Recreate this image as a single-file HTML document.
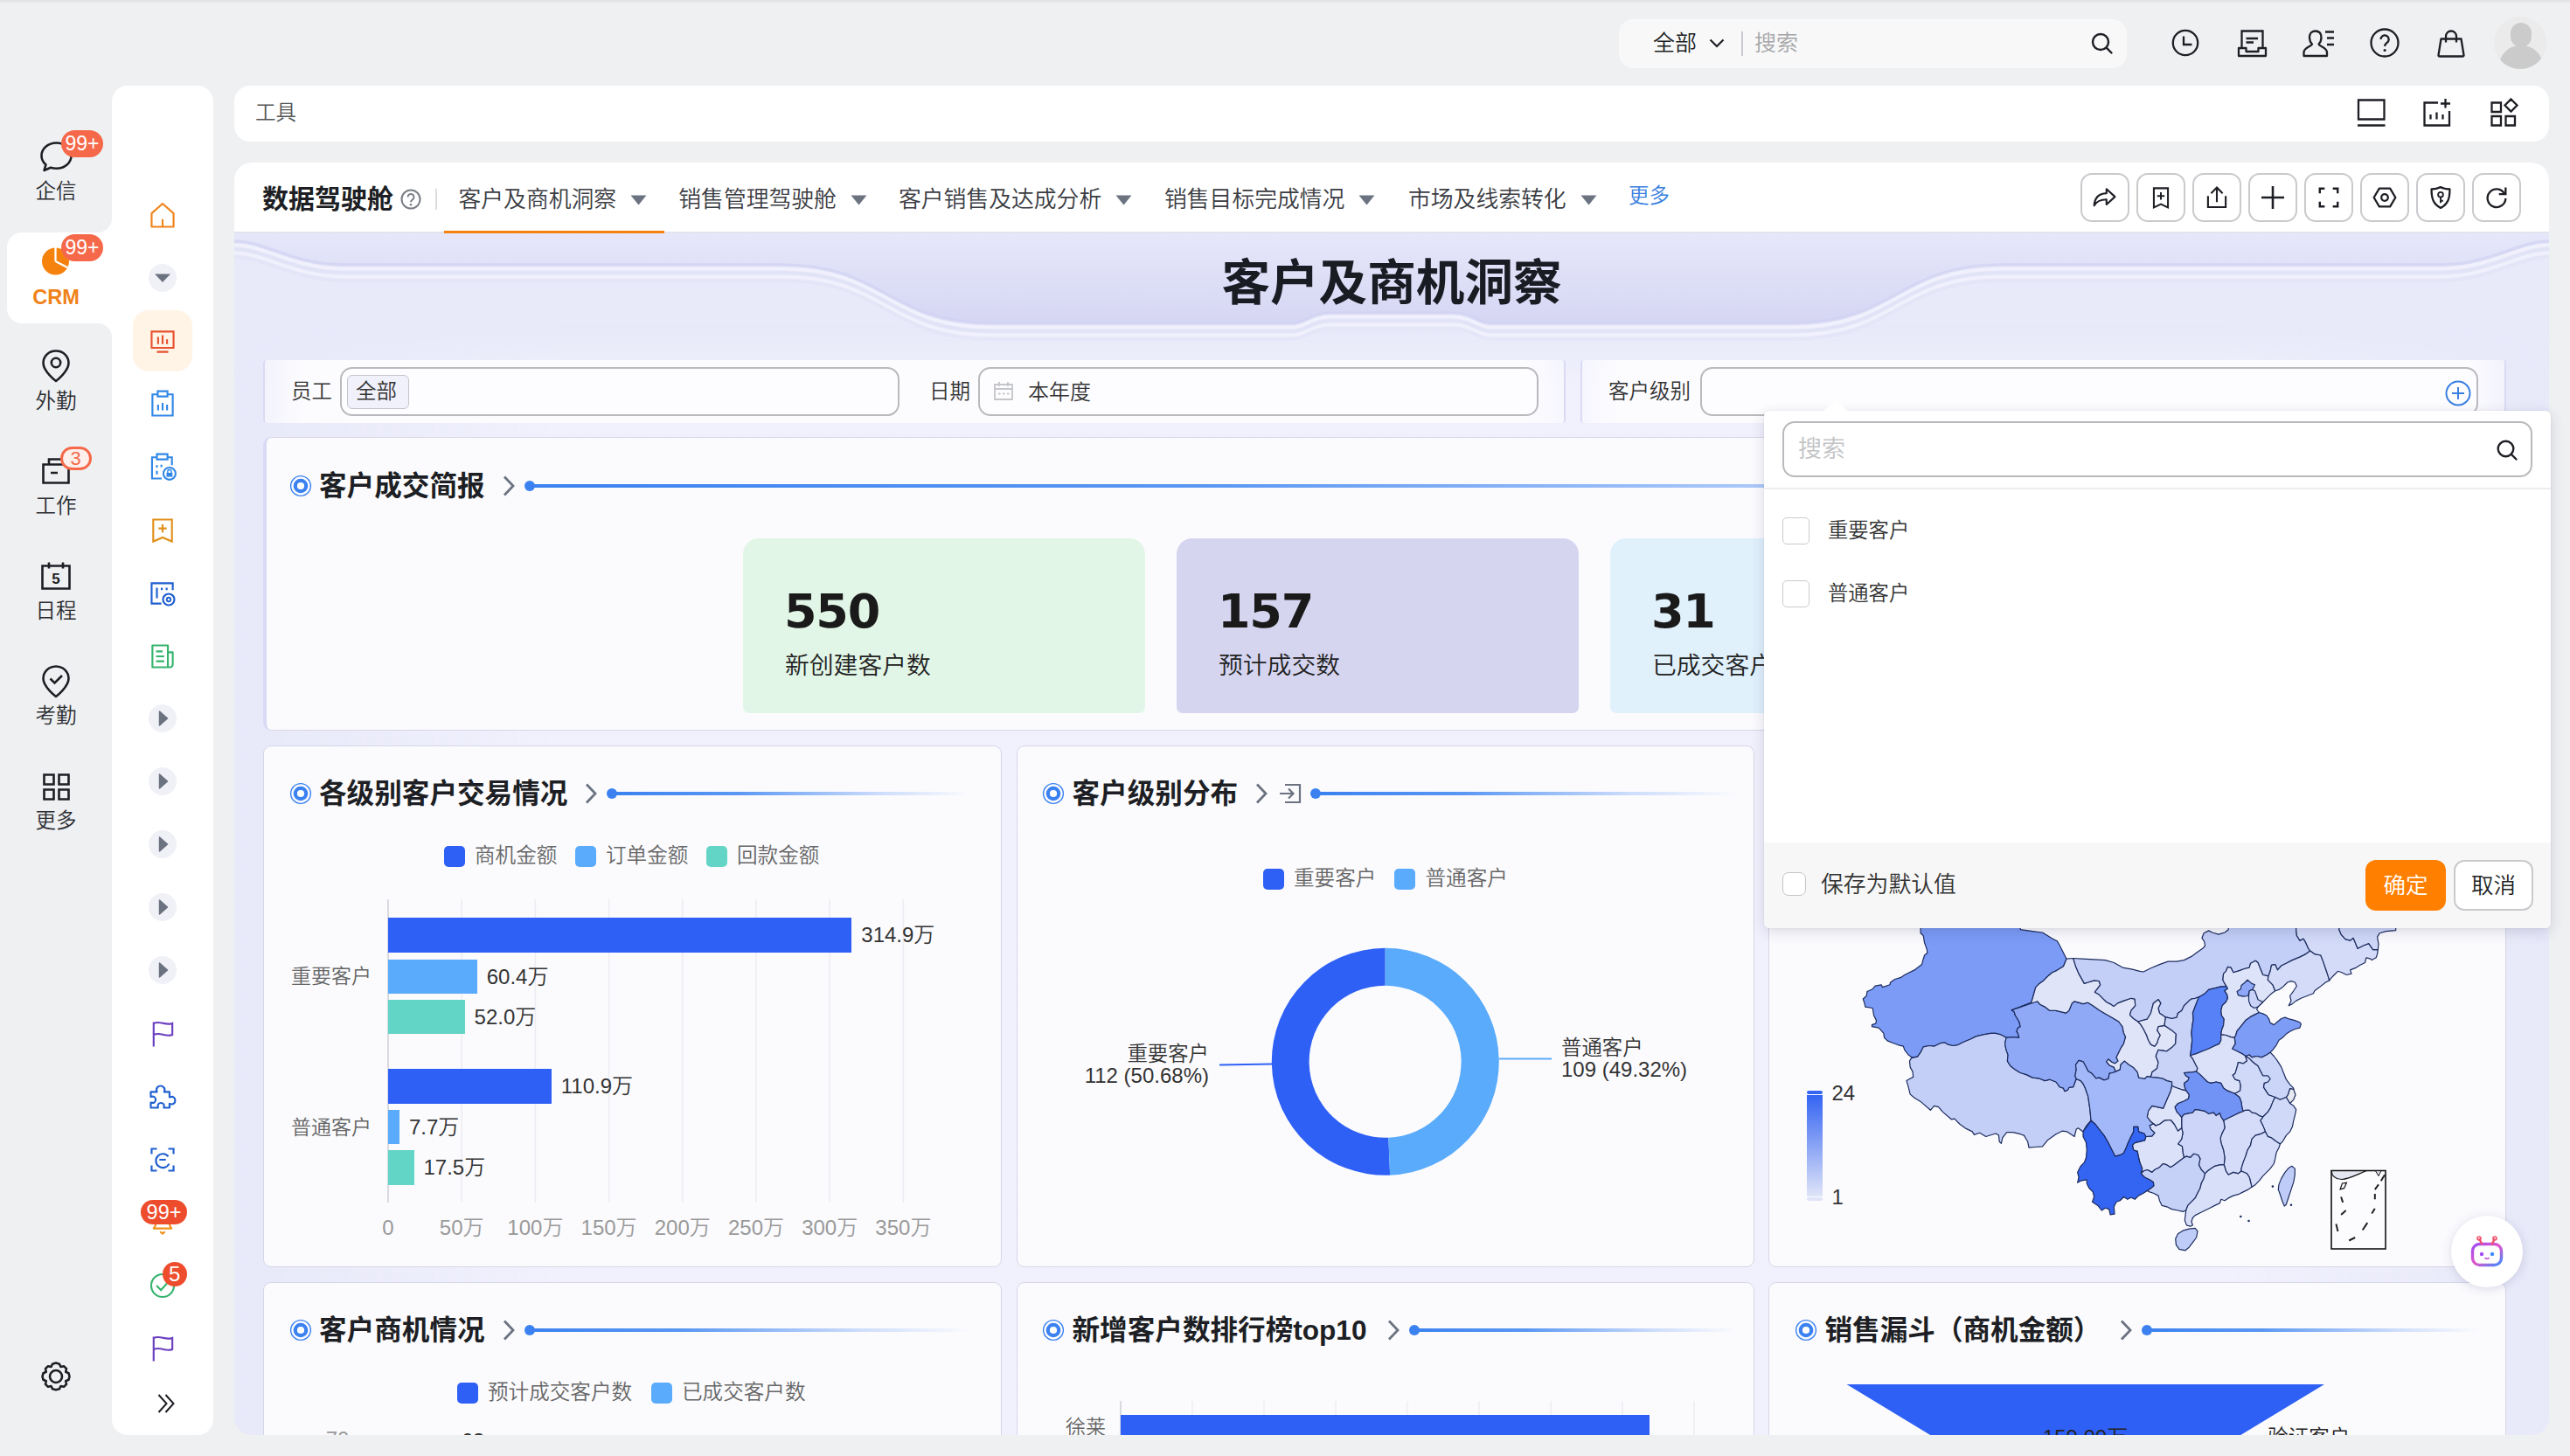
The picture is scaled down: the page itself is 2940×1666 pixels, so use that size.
<!DOCTYPE html>
<html lang="zh-CN"><head><meta charset="utf-8"><title>数据驾驶舱</title>
<style>
html,body{margin:0;padding:0}
body{width:2940px;height:1666px;background:#eff0f2;position:relative;overflow:hidden;font-family:"Liberation Sans","Noto Sans CJK SC",sans-serif;font-weight:350;}
div{box-sizing:border-box}
</style></head><body>
<div style="position:absolute;left:0px;top:0px;width:2940px;height:4px;background:linear-gradient(#dfe0e3,#eff0f2)"></div>
<div style="position:absolute;left:8px;top:266px;width:121px;height:104px;background:#fff;border-radius:17px 0 0 17px"></div>
<div style="position:absolute;left:112px;top:250px;width:16px;height:16px;background:#fff"></div>
<div style="position:absolute;left:96px;top:234px;width:32px;height:32px;background:#eff0f2;border-radius:0 0 16px 0"></div>
<div style="position:absolute;left:112px;top:370px;width:16px;height:16px;background:#fff"></div>
<div style="position:absolute;left:96px;top:370px;width:32px;height:32px;background:#eff0f2;border-radius:0 16px 0 0"></div>
<div style="position:absolute;top:201.5px;height:35px;line-height:35px;font-size:23.5px;color:#2a2c31;font-weight:350;white-space:nowrap;left:-436px;width:1000px;text-align:center;">企信</div>
<div style="position:absolute;top:322.5px;height:35px;line-height:35px;font-size:23.6px;color:#f0821a;font-weight:700;white-space:nowrap;left:-436px;width:1000px;text-align:center;">CRM</div>
<div style="position:absolute;top:441.5px;height:35px;line-height:35px;font-size:23.5px;color:#2a2c31;font-weight:350;white-space:nowrap;left:-436px;width:1000px;text-align:center;">外勤</div>
<div style="position:absolute;top:561.5px;height:35px;line-height:35px;font-size:23.5px;color:#2a2c31;font-weight:350;white-space:nowrap;left:-436px;width:1000px;text-align:center;">工作</div>
<div style="position:absolute;top:681.5px;height:35px;line-height:35px;font-size:23.5px;color:#2a2c31;font-weight:350;white-space:nowrap;left:-436px;width:1000px;text-align:center;">日程</div>
<div style="position:absolute;top:801.5px;height:35px;line-height:35px;font-size:23.5px;color:#2a2c31;font-weight:350;white-space:nowrap;left:-436px;width:1000px;text-align:center;">考勤</div>
<div style="position:absolute;top:921.5px;height:35px;line-height:35px;font-size:23.5px;color:#2a2c31;font-weight:350;white-space:nowrap;left:-436px;width:1000px;text-align:center;">更多</div>
<svg style="position:absolute;left:44px;top:160px;" width="42" height="40" viewBox="0 0 42 40" fill="none"><path d="M20.5 3.5C11 3.500 3.5 10 3.5 18.2c0 4 1.900 7.600 5 10.200L6.500 35l7.500-3.200c2 .6 4.200 1 6.500 1 9.500 0 17-6.500 17-14.600S30 3.500 20.500 3.500z" stroke="#1d1f24" stroke-width="2.600" stroke-linejoin="round"/></svg>
<div style="position:absolute;left:70px;top:149px;width:48px;height:31px;border-radius:15.5px;background:#f5694a;color:#fff;font-size:23px;line-height:31px;text-align:center;">99+</div>
<svg style="position:absolute;left:46px;top:281px;" width="40" height="40" viewBox="0 0 40 40" fill="none"><circle cx="17.5" cy="18" r="15.500" fill="#f5820d"/><path d="M17.500 18V1 M17.500 18L33 26" stroke="#fff" stroke-width="2.300"/></svg>
<div style="position:absolute;left:70px;top:267.5px;width:48px;height:31px;border-radius:15.5px;background:#f5694a;color:#fff;font-size:23px;line-height:31px;text-align:center;">99+</div>
<svg style="position:absolute;left:46px;top:399px;" width="36" height="40" viewBox="0 0 36 40" fill="none"><path d="M18 2.500C9.500 2.500 3.500 8.800 3.500 16.500 3.500 26 18 37 18 37s14.500-11 14.500-20.500C32.500 8.800 26.500 2.500 18 2.500z" stroke="#1d1f24" stroke-width="2.600" stroke-linejoin="round"/><circle cx="18" cy="16" r="5.200" stroke="#1d1f24" stroke-width="2.600"/></svg>
<svg style="position:absolute;left:46px;top:522px;" width="36" height="34" viewBox="0 0 36 34" fill="none"><path d="M3.500 9.500h29v21h-29z M10 9.500V3.500h16v6 M12 19h8" stroke="#1d1f24" stroke-width="2.600"/></svg>
<div style="position:absolute;left:68.500px;top:510.500px;width:36px;height:27px;border-radius:13.500px;background:#fdf0ec;border:3px solid #f5694a;color:#f5694a;font-size:22px;line-height:21px;text-align:center;">3</div>
<svg style="position:absolute;left:46px;top:642px;" width="36" height="34" viewBox="0 0 36 34" fill="none"><path d="M2.500 5.500h31v26h-31z M10 1.500v7 M26 1.500v7" stroke="#1d1f24" stroke-width="2.600"/><text x="18" y="26" font-size="17" font-weight="700" text-anchor="middle" fill="#1d1f24" font-family="Liberation Sans,sans-serif">5</text></svg>
<svg style="position:absolute;left:46px;top:760px;" width="36" height="40" viewBox="0 0 36 40" fill="none"><path d="M18 2.500C9.500 2.500 3.500 8.800 3.500 16.500 3.500 26 18 37 18 37s14.500-11 14.500-20.500C32.500 8.800 26.500 2.500 18 2.500z" stroke="#1d1f24" stroke-width="2.600" stroke-linejoin="round"/><path d="M11.500 16.500l5 5 8.500-8.500" stroke="#1d1f24" stroke-width="2.600"/></svg>
<svg style="position:absolute;left:48px;top:884px;" width="34" height="34" viewBox="0 0 34 34" fill="none"><path d="M2.500 2.500h11v11h-11z M19.500 2.500h11v11h-11z M2.500 19.500h11v11h-11z M19.500 19.500h11v11h-11z" stroke="#1d1f24" stroke-width="2.600"/></svg>
<svg style="position:absolute;left:44px;top:1555px;" width="40" height="40" viewBox="0 0 40 40" fill="none"><path d="M20 4.500l4 1.200 1.500 3.300 3.500-.8 3 3-.8 3.500 3.300 1.500L35.500 20l-1 3.800-3.300 1.500.8 3.500-3 3-3.500-.8-1.500 3.300-4 1-4-1-1.500-3.300-3.500.8-3-3 .8-3.500-3.300-1.500-1-3.800 1-3.800 3.300-1.500-.8-3.500 3-3 3.500.8L16 5.700z" stroke="#1d1f24" stroke-width="2.600" stroke-linejoin="round"/><circle cx="20" cy="20" r="7" stroke="#1d1f24" stroke-width="2.600"/></svg>
<div style="position:absolute;left:128px;top:97.5px;width:116px;height:1544.5px;background:#fff;border-radius:18px"></div>
<div style="position:absolute;left:128px;top:250px;width:20px;height:140px;background:#fff"></div>
<svg style="position:absolute;left:168.0px;top:227.5px;" width="36" height="36" viewBox="0 0 36 36" fill="none"><g transform="translate(18.0 18.0) scale(0.93) translate(-18.0 -18.0)"><path d="M4.500 16L18 4l13.500 12v16.500h-27z M18 32v-9" stroke="#f0831a" stroke-width="2.300" stroke-linejoin="round"/></g></svg>
<div style="position:absolute;left:170px;top:302px;width:32px;height:32px;background:#f0f1f7;border-radius:16px"></div>
<svg style="position:absolute;left:176px;top:312px;" width="20" height="12" viewBox="0 0 20 12" fill="none"><path d="M1 1.500h18L10 11z" fill="#6b7280"/></svg>
<div style="position:absolute;left:152px;top:355px;width:68px;height:70px;background:#fff4e6;border-radius:18px"></div>
<svg style="position:absolute;left:168.0px;top:372.5px;" width="36" height="36" viewBox="0 0 36 36" fill="none"><g transform="translate(18.0 18.0) scale(0.93) translate(-18.0 -18.0)"><path d="M4.500 5.500h27v20h-27z M11 30.500h14" stroke="#e8502f" stroke-width="2.300"/><path d="M12.500 12v9 M18 10v11 M23.500 15v6" stroke="#e8502f" stroke-width="2.300"/></g></svg>
<svg style="position:absolute;left:168.0px;top:443.5px;" width="36" height="36" viewBox="0 0 36 36" fill="none"><g transform="translate(18.0 18.0) scale(0.93) translate(-18.0 -18.0)"><path d="M12 6.500H5.500v26h25v-26H24" stroke="#3288e6" stroke-width="2.300"/><path d="M12 2.500h12v6.500H12z" stroke="#3288e6" stroke-width="2.300"/><path d="M12.500 19v7 M18 17v9 M23.500 19v7" stroke="#3288e6" stroke-width="2.300"/></g></svg>
<svg style="position:absolute;left:168.0px;top:515.5px;" width="36" height="36" viewBox="0 0 36 36" fill="none"><g transform="translate(18.0 18.0) scale(0.93) translate(-18.0 -18.0)"><path d="M11 6.500H5v26h12 M24 6.500h5.500V16" stroke="#3288e6" stroke-width="2.300"/><path d="M11 2.500h13v6.500H11z" stroke="#3288e6" stroke-width="2.300"/><path d="M11 16v3 M11 23v4.500 M16.500 15.500v3" stroke="#3288e6" stroke-width="2.300"/><circle cx="26.500" cy="26.500" r="7.500" stroke="#3288e6" stroke-width="2.200"/><path d="M22.800 25.500h7.400v5h-7.400z" fill="#3288e6"/><path d="M24.300 25.500v-1.500a2.200 2.200 0 0 1 4.400 0v1.500" stroke="#3288e6" stroke-width="1.600"/></g></svg>
<svg style="position:absolute;left:168.0px;top:588.5px;" width="36" height="36" viewBox="0 0 36 36" fill="none"><g transform="translate(18.0 18.0) scale(0.93) translate(-18.0 -18.0)"><path d="M6.500 4.500h23v27l-11.500-5-11.500 5z" stroke="#e0901a" stroke-width="2.300"/><path d="M18 10.500v10 M13 15.500h10" stroke="#e0901a" stroke-width="2.300"/></g></svg>
<svg style="position:absolute;left:168.0px;top:660.5px;" width="36" height="36" viewBox="0 0 36 36" fill="none"><g transform="translate(18.0 18.0) scale(0.93) translate(-18.0 -18.0)"><path d="M30.500 14V5.500h-26v25h12" stroke="#1f5fd0" stroke-width="2.300"/><path d="M11 11v13 M17 11v3 M23 11v3" stroke="#1f5fd0" stroke-width="2.300"/><circle cx="25.500" cy="25.500" r="7" stroke="#1f5fd0" stroke-width="2.300"/><circle cx="25.500" cy="25.500" r="2.400" stroke="#1f5fd0" stroke-width="2"/></g></svg>
<svg style="position:absolute;left:168.0px;top:732.5px;" width="36" height="36" viewBox="0 0 36 36" fill="none"><g transform="translate(18.0 18.0) scale(0.93) translate(-18.0 -18.0)"><path d="M5.500 4.500h19v27h-19z M24.500 13h6v15a3.500 3.500 0 0 1-3.500 3.500h-3" stroke="#36b46e" stroke-width="2.300" stroke-linejoin="round"/><path d="M10 12h8 M10 18h10 M10 24h10" stroke="#36b46e" stroke-width="2.300"/></g></svg>
<div style="position:absolute;left:170px;top:806px;width:32px;height:32px;background:#f0f1f7;border-radius:16px"></div>
<svg style="position:absolute;left:181px;top:813px;" width="12" height="18" viewBox="0 0 12 18" fill="none"><path d="M1.500 1v16l9-8z" fill="#6b7280" stroke="#6b7280" stroke-width="1.500" stroke-linejoin="round"/></svg>
<div style="position:absolute;left:170px;top:878px;width:32px;height:32px;background:#f0f1f7;border-radius:16px"></div>
<svg style="position:absolute;left:181px;top:885px;" width="12" height="18" viewBox="0 0 12 18" fill="none"><path d="M1.500 1v16l9-8z" fill="#6b7280" stroke="#6b7280" stroke-width="1.500" stroke-linejoin="round"/></svg>
<div style="position:absolute;left:170px;top:950px;width:32px;height:32px;background:#f0f1f7;border-radius:16px"></div>
<svg style="position:absolute;left:181px;top:957px;" width="12" height="18" viewBox="0 0 12 18" fill="none"><path d="M1.500 1v16l9-8z" fill="#6b7280" stroke="#6b7280" stroke-width="1.500" stroke-linejoin="round"/></svg>
<div style="position:absolute;left:170px;top:1022px;width:32px;height:32px;background:#f0f1f7;border-radius:16px"></div>
<svg style="position:absolute;left:181px;top:1029px;" width="12" height="18" viewBox="0 0 12 18" fill="none"><path d="M1.500 1v16l9-8z" fill="#6b7280" stroke="#6b7280" stroke-width="1.500" stroke-linejoin="round"/></svg>
<div style="position:absolute;left:170px;top:1094px;width:32px;height:32px;background:#f0f1f7;border-radius:16px"></div>
<svg style="position:absolute;left:181px;top:1101px;" width="12" height="18" viewBox="0 0 12 18" fill="none"><path d="M1.500 1v16l9-8z" fill="#6b7280" stroke="#6b7280" stroke-width="1.500" stroke-linejoin="round"/></svg>
<svg style="position:absolute;left:168.0px;top:1164.5px;" width="36" height="36" viewBox="0 0 36 36" fill="none"><g transform="translate(18.0 18.0) scale(0.93) translate(-18.0 -18.0)"><path d="M7 33.500V3.500 M7 5c5-2 8-1 12 0s7 1.500 11 0v14c-4 1.500-7 1-11 0s-7-2-12 0" stroke="#6a3fc0" stroke-width="2.300"/></g></svg>
<svg style="position:absolute;left:168.0px;top:1236.5px;" width="36" height="36" viewBox="0 0 36 36" fill="none"><g transform="translate(18.0 18.0) scale(0.93) translate(-18.0 -18.0)"><path d="M5 13h7.500c-2-5 2-7.500 4.500-7.500s6.500 2.500 4.500 7.500H28v6.500c5-2 7 1.500 7 4s-2 6-7 4V32.500h-7c1.500-4-1-6-3.500-6s-5 2-3.500 6H5v-6.500c4 1.500 6-1 6-3.500s-2-5-6-3.500z" stroke="#1f5fd0" stroke-width="2.300" stroke-linejoin="round" transform="translate(-1.500,-1)"/></g></svg>
<svg style="position:absolute;left:168.0px;top:1308.5px;" width="36" height="36" viewBox="0 0 36 36" fill="none"><g transform="translate(18.0 18.0) scale(0.93) translate(-18.0 -18.0)"><path d="M4.500 11V4.500H11 M25 4.500h6.500V11 M31.500 25v6.500H25 M11 31.500H4.500V25" stroke="#1f5fd0" stroke-width="2.300"/><path d="M25 14a8.500 8.500 0 1 0 1 9 M14 18h8" stroke="#1f5fd0" stroke-width="2.300"/></g></svg>
<svg style="position:absolute;left:168.0px;top:1381.5px;" width="36" height="36" viewBox="0 0 36 36" fill="none"><g transform="translate(18.0 18.0) scale(0.93) translate(-18.0 -18.0)"><path d="M7 24c3-3 3-7 3-10a8 8 0 0 1 16 0c0 3 0 7 3 10z M15 28l3 2.500 3-2.500" stroke="#f0901a" stroke-width="2.300" stroke-linejoin="round"/></g></svg>
<div style="position:absolute;left:161px;top:1372.5px;width:53px;height:28px;border-radius:14.0px;background:#ee4d2d;color:#fff;font-size:23.5px;line-height:28px;text-align:center;">99+</div>
<svg style="position:absolute;left:168.0px;top:1452.5px;" width="36" height="36" viewBox="0 0 36 36" fill="none"><g transform="translate(18.0 18.0) scale(0.93) translate(-18.0 -18.0)"><circle cx="18" cy="18" r="14" stroke="#36b46e" stroke-width="2.300"/><path d="M10.500 18l5.500 5.500 9-10" stroke="#36b46e" stroke-width="2.300"/></g></svg>
<div style="position:absolute;left:185.5px;top:1443.5px;width:28.5px;height:28.5px;border-radius:14.25px;background:#ee4d2d;color:#fff;font-size:24px;line-height:28.5px;text-align:center;">5</div>
<svg style="position:absolute;left:168.0px;top:1524.5px;" width="36" height="36" viewBox="0 0 36 36" fill="none"><g transform="translate(18.0 18.0) scale(0.93) translate(-18.0 -18.0)"><path d="M7 33.500V3.500 M7 5c5-2 8-1 12 0s7 1.500 11 0v14c-4 1.500-7 1-11 0s-7-2-12 0" stroke="#6a3fc0" stroke-width="2.300"/></g></svg>
<svg style="position:absolute;left:180px;top:1595px;" width="22" height="22" viewBox="0 0 22 22" fill="none"><path d="M1.500 1l9 10-9 10 M9.500 1l9 10-9 10" stroke="#1d1f24" stroke-width="2"/></svg>
<div style="position:absolute;left:1852px;top:22px;width:581px;height:56px;background:#f8f8f9;border-radius:16px"></div>
<div style="position:absolute;top:30.5px;height:37px;line-height:37px;font-size:25px;color:#1d1f24;font-weight:350;white-space:nowrap;left:1891px;">全部</div>
<svg style="position:absolute;left:1955px;top:44px;" width="18" height="12" viewBox="0 0 18 12" fill="none"><path d="M1.500 1.500l7.500 7.500 7.500-7.500" stroke="#1d1f24" stroke-width="2.200"/></svg>
<div style="position:absolute;left:1992px;top:36px;width:2px;height:28px;background:#c8c9cc"></div>
<div style="position:absolute;top:30.5px;height:37px;line-height:37px;font-size:25px;color:#a6a6a8;font-weight:350;white-space:nowrap;left:2007px;">搜索</div>
<svg style="position:absolute;left:2391px;top:36px;" width="30" height="30" viewBox="0 0 30 30" fill="none"><circle cx="12" cy="12" r="9" stroke="#1d1f24" stroke-width="2.400"/><path d="M18.700 18.700L24.500 24.500" stroke="#1d1f24" stroke-width="2.400" stroke-linecap="round"/></svg>
<svg style="position:absolute;left:2481px;top:30px;" width="38" height="38" viewBox="0 0 38 38" fill="none"><circle cx="19" cy="19" r="14.200" stroke="#1d1f24" stroke-width="2.300"/><path d="M17 11.500v9.500h9.500" stroke="#1d1f24" stroke-width="2.300"/></svg>
<svg style="position:absolute;left:2557px;top:30px;" width="38" height="38" viewBox="0 0 38 38" fill="none"><path d="M7.500 24.500V5.500h24V24.500" stroke="#1d1f24" stroke-width="2.300"/><path d="M4 25h8.500v4h14v-4H35v9H4z" stroke="#1d1f24" stroke-width="2.300" stroke-linejoin="round"/><path d="M12.500 14h13.500 M12.500 18.500h8.500" stroke="#1d1f24" stroke-width="2.300"/></svg>
<svg style="position:absolute;left:2633px;top:30px;" width="38" height="38" viewBox="0 0 38 38" fill="none"><path d="M15.500 5.500c-4.500 0-6.500 3.500-6.500 7.500 0 3.500 1.500 6 3 7.500-.8 2.800-9.500 3.500-9.500 9.500v4h26.500v-4c0-6-8.700-6.700-9.500-9.500 1.500-1.500 3-4 3-7.500 0-4-2-7.500-7-7.500z" stroke="#1d1f24" stroke-width="2.300" stroke-linejoin="round"/><path d="M27 6.500h10 M29 13.500h8 M29 21h8" stroke="#1d1f24" stroke-width="2.300"/></svg>
<svg style="position:absolute;left:2709px;top:30px;" width="38" height="38" viewBox="0 0 38 38" fill="none"><circle cx="19" cy="19" r="15.500" stroke="#1d1f24" stroke-width="2.300"/><path d="M14.500 15a4.600 4.600 0 1 1 7 4c-1.700 1-2.400 2-2.400 4" stroke="#1d1f24" stroke-width="2.300"/><circle cx="19.100" cy="27.500" r="1.600" fill="#1d1f24"/></svg>
<svg style="position:absolute;left:2785px;top:30px;" width="38" height="38" viewBox="0 0 38 38" fill="none"><path d="M7.500 14.500h23l3 18.500c.1 1-.5 1.500-1.500 1.500h-26c-1 0-1.600-.5-1.500-1.500z" stroke="#1d1f24" stroke-width="2.300" stroke-linejoin="round"/><path d="M13 18.500v-7a6 6 0 0 1 12 0v7" stroke="#1d1f24" stroke-width="2.300"/></svg>
<div style="position:absolute;left:2853px;top:19px;width:60px;height:60px;border-radius:30px;background:#ebebec;overflow:hidden"><div style="position:absolute;left:19px;top:7px;width:24px;height:28px;border-radius:12px;background:#cbcbcb"></div><div style="position:absolute;left:6px;top:33px;width:50px;height:40px;border-radius:24px 24px 0 0;background:#cbcbcb"></div></div>
<div style="position:absolute;left:268px;top:97.5px;width:2648px;height:64.5px;background:#fff;border-radius:18px"></div>
<div style="position:absolute;top:111.5px;height:35px;line-height:35px;font-size:23.5px;color:#555;font-weight:350;white-space:nowrap;left:292px;">工具</div>
<svg style="position:absolute;left:2694px;top:110px;" width="38" height="38" viewBox="0 0 38 38" fill="none"><path d="M4 4.500h29.500v22H4z M3 33.500h31.500" stroke="#1d1f24" stroke-width="2.300"/></svg>
<svg style="position:absolute;left:2769px;top:110px;" width="38" height="38" viewBox="0 0 38 38" fill="none"><path d="M20 7.500H4.500v26h28.500V17" stroke="#1d1f24" stroke-width="2.300"/><path d="M11.500 21v5.500 M18.500 18.500v8 M25.500 21v5.500" stroke="#1d1f24" stroke-width="2.300"/><path d="M28.500 3v10.500 M23 8.500h11" stroke="#1d1f24" stroke-width="2.300"/></svg>
<svg style="position:absolute;left:2846px;top:110px;" width="38" height="38" viewBox="0 0 38 38" fill="none"><path d="M4.500 7.500h10.500v10.500H4.500z M4.500 23h10.500v10.500H4.500z M20.500 23h10.500v10.500H20.500z M26.500 3.500l7 7-7 7-7-7z" stroke="#1d1f24" stroke-width="2.300"/></svg>
<div style="position:absolute;left:268px;top:186px;width:2648px;height:1456px;border-radius:20px;overflow:hidden;background:#e8e9f9">
<div style="position:absolute;left:-268px;top:-186px;width:2940px;height:1666px">
<div style="position:absolute;left:268px;top:186px;width:2648px;height:80.5px;background:#fff"></div>
<div style="position:absolute;left:268px;top:265px;width:2648px;height:2px;background:#e3e3ee"></div>
<div style="position:absolute;top:204.5px;height:45px;line-height:45px;font-size:30px;color:#1d1f24;font-weight:700;white-space:nowrap;left:300px;">数据驾驶舱</div>
<svg style="position:absolute;left:457px;top:215px;" width="26" height="26" viewBox="0 0 26 26" fill="none"><circle cx="13" cy="13" r="10.500" stroke="#7a7d85" stroke-width="2"/><path d="M9.500 10.500a3.500 3.500 0 1 1 5.300 3c-1.300.8-1.800 1.500-1.800 2.800" stroke="#7a7d85" stroke-width="2"/><circle cx="13" cy="19.300" r="1.300" fill="#7a7d85"/></svg>
<div style="position:absolute;left:498px;top:216px;width:2px;height:24px;background:#dcdde0"></div>
<div style="position:absolute;top:209.0px;height:38px;line-height:38px;font-size:25.8px;color:#3a3c42;font-weight:350;white-space:nowrap;left:524.5px;">客户及商机洞察</div>
<svg style="position:absolute;left:721.1px;top:223px;" width="19" height="12" viewBox="0 0 19 12" fill="none"><path d="M0.500 0.500h18L9.500 11.500z" fill="#6b7280"/></svg>
<div style="position:absolute;top:209.0px;height:38px;line-height:38px;font-size:25.8px;color:#3a3c42;font-weight:350;white-space:nowrap;left:776.3px;">销售管理驾驶舱</div>
<svg style="position:absolute;left:972.9px;top:223px;" width="19" height="12" viewBox="0 0 19 12" fill="none"><path d="M0.500 0.500h18L9.500 11.500z" fill="#6b7280"/></svg>
<div style="position:absolute;top:209.0px;height:38px;line-height:38px;font-size:25.8px;color:#3a3c42;font-weight:350;white-space:nowrap;left:1028px;">客户销售及达成分析</div>
<svg style="position:absolute;left:1276.2px;top:223px;" width="19" height="12" viewBox="0 0 19 12" fill="none"><path d="M0.500 0.500h18L9.500 11.500z" fill="#6b7280"/></svg>
<div style="position:absolute;top:209.0px;height:38px;line-height:38px;font-size:25.8px;color:#3a3c42;font-weight:350;white-space:nowrap;left:1332px;">销售目标完成情况</div>
<svg style="position:absolute;left:1554.4px;top:223px;" width="19" height="12" viewBox="0 0 19 12" fill="none"><path d="M0.500 0.500h18L9.500 11.500z" fill="#6b7280"/></svg>
<div style="position:absolute;top:209.0px;height:38px;line-height:38px;font-size:25.8px;color:#3a3c42;font-weight:350;white-space:nowrap;left:1611px;">市场及线索转化</div>
<svg style="position:absolute;left:1807.6px;top:223px;" width="19" height="12" viewBox="0 0 19 12" fill="none"><path d="M0.500 0.500h18L9.500 11.500z" fill="#6b7280"/></svg>
<div style="position:absolute;top:207.0px;height:35px;line-height:35px;font-size:23.5px;color:#3a7fe0;font-weight:350;white-space:nowrap;left:1863px;">更多</div>
<div style="position:absolute;left:508px;top:263.8px;width:252px;height:4px;background:#f5820d"></div>
<div style="position:absolute;left:2380px;top:198px;width:56px;height:56px;border:2px solid #c9cacd;border-radius:13px;background:#fff"></div>
<svg style="position:absolute;left:2380px;top:198px;" width="56" height="56" viewBox="0 0 56 56" fill="none"><g transform="translate(28 28) scale(0.88) translate(-28 -28)"><path d="M21 9l11 10-11 10v-6.500c-8 0-13 2.500-16 8 .5-9 5.500-15.500 16-16z" stroke="#1d1f24" stroke-width="2.400" stroke-linejoin="round" transform="translate(9,8)"/></g></svg>
<div style="position:absolute;left:2444px;top:198px;width:56px;height:56px;border:2px solid #c9cacd;border-radius:13px;background:#fff"></div>
<svg style="position:absolute;left:2444px;top:198px;" width="56" height="56" viewBox="0 0 56 56" fill="none"><g transform="translate(28 28) scale(0.85) translate(-28 -28)"><path d="M18.500 15.500h19v26l-9.500-4.500-9.500 4.500z M28 21v10 M23 26h10" stroke="#1d1f24" stroke-width="2.400"/></g></svg>
<div style="position:absolute;left:2508px;top:198px;width:56px;height:56px;border:2px solid #c9cacd;border-radius:13px;background:#fff"></div>
<svg style="position:absolute;left:2508px;top:198px;" width="56" height="56" viewBox="0 0 56 56" fill="none"><g transform="translate(28 28) scale(0.88) translate(-28 -28)"><path d="M16.500 26v14.500h23V26 M28 34V15 M20.500 22.500L28 15l7.500 7.500" stroke="#1d1f24" stroke-width="2.400"/></g></svg>
<div style="position:absolute;left:2572px;top:198px;width:56px;height:56px;border:2px solid #c9cacd;border-radius:13px;background:#fff"></div>
<svg style="position:absolute;left:2572px;top:198px;" width="56" height="56" viewBox="0 0 56 56" fill="none"><g transform="translate(28 28) scale(1.0) translate(-28 -28)"><path d="M28 15v26 M15 28h26" stroke="#1d1f24" stroke-width="2.600"/></g></svg>
<div style="position:absolute;left:2636px;top:198px;width:56px;height:56px;border:2px solid #c9cacd;border-radius:13px;background:#fff"></div>
<svg style="position:absolute;left:2636px;top:198px;" width="56" height="56" viewBox="0 0 56 56" fill="none"><g transform="translate(28 28) scale(0.93) translate(-28 -28)"><path d="M17 23v-6h6 M33 17h6v6 M39 33v6h-6 M23 39h-6v-6" stroke="#1d1f24" stroke-width="2.600"/></g></svg>
<div style="position:absolute;left:2700px;top:198px;width:56px;height:56px;border:2px solid #c9cacd;border-radius:13px;background:#fff"></div>
<svg style="position:absolute;left:2700px;top:198px;" width="56" height="56" viewBox="0 0 56 56" fill="none"><g transform="translate(28 28) scale(0.95) translate(-28 -28)"><path d="M21.500 17h13l6.500 11-6.500 11h-13L15 28z" stroke="#1d1f24" stroke-width="2.400" stroke-linejoin="round"/><circle cx="28" cy="28" r="4" stroke="#1d1f24" stroke-width="2.400"/></g></svg>
<div style="position:absolute;left:2764px;top:198px;width:56px;height:56px;border:2px solid #c9cacd;border-radius:13px;background:#fff"></div>
<svg style="position:absolute;left:2764px;top:198px;" width="56" height="56" viewBox="0 0 56 56" fill="none"><g transform="translate(28 28) scale(0.95) translate(-28 -28)"><path d="M28 15.500c4 2 7 2.500 11 2.500 0 11-2 18-11 22.500-9-4.500-11-11.500-11-22.500 4 0 7-.500 11-2.500z" stroke="#1d1f24" stroke-width="2.400" stroke-linejoin="round"/><circle cx="28" cy="24.500" r="3" stroke="#1d1f24" stroke-width="2"/><path d="M28 27.500v7 M28 32h3" stroke="#1d1f24" stroke-width="2"/></g></svg>
<div style="position:absolute;left:2828px;top:198px;width:56px;height:56px;border:2px solid #c9cacd;border-radius:13px;background:#fff"></div>
<svg style="position:absolute;left:2828px;top:198px;" width="56" height="56" viewBox="0 0 56 56" fill="none"><g transform="translate(28 29) scale(0.9) translate(-28 -28)"><path d="M38 22a11.500 11.500 0 1 0 1.500 6" stroke="#1d1f24" stroke-width="2.600"/><path d="M39.500 14v8.500H31" stroke="#1d1f24" stroke-width="2.600"/></g></svg>
<div style="position:absolute;left:268px;top:372px;width:2648px;height:1270px;background:linear-gradient(90deg,rgba(241,241,253,0) 0%,rgba(241,241,253,0.95) 14%,rgba(241,241,253,0.95) 86%,rgba(241,241,253,0) 100%);-webkit-mask-image:linear-gradient(rgba(0,0,0,0) 0,#000 70px);mask-image:linear-gradient(rgba(0,0,0,0) 0,#000 70px)"></div>
<svg style="position:absolute;left:0px;top:0px;" width="2940" height="420" viewBox="0 0 2940 420" fill="none"><defs>
<linearGradient id="bg1" x1="0" y1="0" x2="0" y2="1"><stop offset="0" stop-color="#e6e7fa"/><stop offset="1" stop-color="#d6d6f4"/></linearGradient>
</defs>
<path d="M268 267H2916V276C2880 276 2850 303 2790 303H2290C2170 303 2170 370 2050 370H1705C1690 370 1685 358 1660 358H1524C1499 358 1494 370 1479 370H1134C1014 370 1014 303 894 303H394C334 303 304 276 268 276Z" fill="url(#bg1)"/>
<path d="M268 276.0C304 276.0 334 303.0 394 303.0H894C1014 303.0 1014 370.0 1134 370.0H1479C1494 370.0 1499 358.0 1524 358.0H1660C1685 358.0 1690 370.0 1705 370.0H2050C2170 370.0 2170 303.0 2290 303.0H2790C2850 303.0 2880 276.0 2916 276.0" stroke="#d0d1f2" stroke-width="3.500" opacity="0.7"/><path d="M268 280.5C304 280.5 334 307.5 394 307.5H894C1014 307.5 1014 374.5 1134 374.5H1479C1494 374.5 1499 362.5 1524 362.5H1660C1685 362.5 1690 374.5 1705 374.5H2050C2170 374.5 2170 307.5 2290 307.5H2790C2850 307.5 2880 280.5 2916 280.5" stroke="#f1f2fd" stroke-width="3.500" opacity="0.9"/><path d="M268 285.0C304 285.0 334 312.0 394 312.0H894C1014 312.0 1014 379.0 1134 379.0H1479C1494 379.0 1499 367.0 1524 367.0H1660C1685 367.0 1690 379.0 1705 379.0H2050C2170 379.0 2170 312.0 2290 312.0H2790C2850 312.0 2880 285.0 2916 285.0" stroke="#dedff7" stroke-width="3.500" opacity="0.7"/><path d="M268 289.5C304 289.5 334 316.5 394 316.5H894C1014 316.5 1014 383.5 1134 383.5H1479C1494 383.5 1499 371.5 1524 371.5H1660C1685 371.5 1690 383.5 1705 383.5H2050C2170 383.5 2170 316.5 2290 316.5H2790C2850 316.5 2880 289.5 2916 289.5" stroke="#f1f2fd" stroke-width="3.500" opacity="0.8"/><path d="M268 294.0C304 294.0 334 321.0 394 321.0H894C1014 321.0 1014 388.0 1134 388.0H1479C1494 388.0 1499 376.0 1524 376.0H1660C1685 376.0 1690 388.0 1705 388.0H2050C2170 388.0 2170 321.0 2290 321.0H2790C2850 321.0 2880 294.0 2916 294.0" stroke="#e1e2f8" stroke-width="3.500" opacity="0.5"/></svg>
<div style="position:absolute;top:284.0px;height:80px;line-height:80px;font-size:55.6px;color:#1a1c24;font-weight:700;white-space:nowrap;left:1092px;width:1000px;text-align:center;">客户及商机洞察</div>
<div style="position:absolute;left:301px;top:412px;width:1490px;height:72px;background:linear-gradient(90deg,rgba(251,251,255,0.55),#fcfcff 3%,#fcfcff 97%,rgba(251,251,255,0.55));border-radius:4px;border-left:2.500px solid #dadaf4;border-right:2.500px solid #dadaf4"></div>
<div style="position:absolute;top:431.0px;height:35px;line-height:35px;font-size:23.5px;color:#333;font-weight:350;white-space:nowrap;left:333px;">员工</div>
<div style="position:absolute;left:389px;top:420px;width:640px;height:56px;background:#fdfdff;border:2px solid #b9babd;border-radius:14px"></div>
<div style="position:absolute;left:397px;top:429px;width:71px;height:39px;background:#f0f1fa;border:1.500px solid #c4c5cc;border-radius:6px"></div>
<div style="position:absolute;top:431.0px;height:35px;line-height:35px;font-size:23.5px;color:#333;font-weight:350;white-space:nowrap;left:407px;">全部</div>
<div style="position:absolute;top:431.0px;height:35px;line-height:35px;font-size:23.5px;color:#333;font-weight:350;white-space:nowrap;left:1063px;">日期</div>
<div style="position:absolute;left:1119px;top:420px;width:641px;height:56px;background:#fdfdff;border:2px solid #b9babd;border-radius:14px"></div>
<svg style="position:absolute;left:1136px;top:435px;" width="24" height="24" viewBox="0 0 24 24" fill="none"><path d="M2 5h20v17H2z M2 10h20 M7 2v5 M17 2v5" stroke="#c4c5c8" stroke-width="1.800"/><path d="M6 15.500h2.500 M11 15.500h2.500 M16 15.500h2.500" stroke="#c4c5c8" stroke-width="2"/></svg>
<div style="position:absolute;top:430.5px;height:36px;line-height:36px;font-size:24px;color:#333;font-weight:350;white-space:nowrap;left:1176px;">本年度</div>
<div style="position:absolute;left:1808px;top:412px;width:1059px;height:72px;background:linear-gradient(90deg,rgba(251,251,255,0.55),#fcfcff 4%,#fcfcff 96%,rgba(251,251,255,0.55));border-radius:4px;border-left:2.500px solid #dadaf4;border-right:2.500px solid #dadaf4"></div>
<div style="position:absolute;top:431.0px;height:35px;line-height:35px;font-size:23.5px;color:#333;font-weight:350;white-space:nowrap;left:1840px;">客户级别</div>
<div style="position:absolute;left:1945px;top:420px;width:890px;height:56px;background:#fdfdff;border:2px solid #b9babd;border-radius:14px"></div>
<svg style="position:absolute;left:2796px;top:434px;" width="32" height="32" viewBox="0 0 32 32" fill="none"><circle cx="16" cy="16" r="13.500" stroke="#3a7fe0" stroke-width="2"/><path d="M16 9v14 M9 16h14" stroke="#3a7fe0" stroke-width="2"/></svg>
<div style="position:absolute;left:301px;top:500px;width:2566px;height:336px;background:#fbfbfe;border:1.500px solid #d6d6e8;border-radius:9px;border-left:4px solid #dadaf6;"></div>
<svg style="position:absolute;left:330.5px;top:542.5px;" width="26" height="26" viewBox="0 0 26 26" fill="none"><circle cx="13" cy="13" r="11.400" stroke="#3b82f0" stroke-width="1.400"/><circle cx="13" cy="13" r="6.200" stroke="#3b82f0" stroke-width="4.200" fill="#fff"/></svg>
<div style="position:absolute;top:531.5px;height:48px;line-height:48px;font-size:31.6px;color:#1d1f24;font-weight:700;white-space:nowrap;left:365px;">客户成交简报</div>
<svg style="position:absolute;left:574.6px;top:543.5px;" width="14" height="24" viewBox="0 0 14 24" fill="none"><path d="M2 1.500l10 10.500-10 10.500" stroke="#6b7280" stroke-width="2.800"/></svg>
<div style="position:absolute;left:605.6px;top:553.5px;width:2229.4px;height:4px;background:linear-gradient(90deg,#3b82f0 0%,#5a97f3 35%,rgba(120,165,245,0.35) 75%,rgba(120,165,245,0) 100%);border-radius:2px"></div>
<div style="position:absolute;left:599.6px;top:549.5px;width:12px;height:12px;background:#3b82f0;border-radius:6px"></div>
<div style="position:absolute;left:850px;top:616px;width:460px;height:200px;background:#e2f6e7;border-radius:18px 18px 7px 7px"></div>
<div style="position:absolute;top:665.0px;height:70px;line-height:70px;font-size:54px;color:#1a1a1a;font-weight:700;white-space:nowrap;font-family:'DejaVu Sans',sans-serif;left:897px;letter-spacing:-1.200px;">550</div>
<div style="position:absolute;top:741.0px;height:41px;line-height:41px;font-size:27.8px;color:#222;font-weight:350;white-space:nowrap;left:898px;">新创建客户数</div>
<div style="position:absolute;left:1346px;top:616px;width:460px;height:200px;background:#d6d5f0;border-radius:18px 18px 7px 7px"></div>
<div style="position:absolute;top:665.0px;height:70px;line-height:70px;font-size:54px;color:#1a1a1a;font-weight:700;white-space:nowrap;font-family:'DejaVu Sans',sans-serif;left:1393px;letter-spacing:-1.200px;">157</div>
<div style="position:absolute;top:741.0px;height:41px;line-height:41px;font-size:27.8px;color:#222;font-weight:350;white-space:nowrap;left:1394px;">预计成交数</div>
<div style="position:absolute;left:1842px;top:616px;width:460px;height:200px;background:#e0f1fc;border-radius:18px 18px 7px 7px"></div>
<div style="position:absolute;top:665.0px;height:70px;line-height:70px;font-size:54px;color:#1a1a1a;font-weight:700;white-space:nowrap;font-family:'DejaVu Sans',sans-serif;left:1889px;letter-spacing:-1.200px;">31</div>
<div style="position:absolute;top:741.0px;height:41px;line-height:41px;font-size:27.8px;color:#222;font-weight:350;white-space:nowrap;left:1890px;">已成交客户数</div>
<div style="position:absolute;left:301px;top:853px;width:844.5px;height:597px;background:#fbfbfe;border:1.500px solid #d6d6e8;border-radius:9px;"></div>
<div style="position:absolute;left:1162.5px;top:853px;width:844.5px;height:597px;background:#fbfbfe;border:1.500px solid #d6d6e8;border-radius:9px;"></div>
<div style="position:absolute;left:2022.7px;top:853px;width:844.5px;height:597px;background:#fbfbfe;border:1.500px solid #d6d6e8;border-radius:9px;"></div>
<svg style="position:absolute;left:330.5px;top:894.5px;" width="26" height="26" viewBox="0 0 26 26" fill="none"><circle cx="13" cy="13" r="11.400" stroke="#3b82f0" stroke-width="1.400"/><circle cx="13" cy="13" r="6.200" stroke="#3b82f0" stroke-width="4.200" fill="#fff"/></svg>
<div style="position:absolute;top:883.5px;height:48px;line-height:48px;font-size:31.6px;color:#1d1f24;font-weight:700;white-space:nowrap;left:365px;">各级别客户交易情况</div>
<svg style="position:absolute;left:669.4000000000001px;top:895.5px;" width="14" height="24" viewBox="0 0 14 24" fill="none"><path d="M2 1.500l10 10.500-10 10.500" stroke="#6b7280" stroke-width="2.800"/></svg>
<div style="position:absolute;left:700.4000000000001px;top:905.5px;width:409.5999999999999px;height:4px;background:linear-gradient(90deg,#3b82f0 0%,#5a97f3 35%,rgba(120,165,245,0.35) 75%,rgba(120,165,245,0) 100%);border-radius:2px"></div>
<div style="position:absolute;left:694.4000000000001px;top:901.5px;width:12px;height:12px;background:#3b82f0;border-radius:6px"></div>
<svg style="position:absolute;left:1192.0px;top:894.5px;" width="26" height="26" viewBox="0 0 26 26" fill="none"><circle cx="13" cy="13" r="11.400" stroke="#3b82f0" stroke-width="1.400"/><circle cx="13" cy="13" r="6.200" stroke="#3b82f0" stroke-width="4.200" fill="#fff"/></svg>
<div style="position:absolute;top:883.5px;height:48px;line-height:48px;font-size:31.6px;color:#1d1f24;font-weight:700;white-space:nowrap;left:1226.5px;">客户级别分布</div>
<svg style="position:absolute;left:1436.1px;top:895.5px;" width="14" height="24" viewBox="0 0 14 24" fill="none"><path d="M2 1.500l10 10.500-10 10.500" stroke="#6b7280" stroke-width="2.800"/></svg>
<svg style="position:absolute;left:1462.6px;top:895.5px;" width="26" height="24" viewBox="0 0 26 24" fill="none"><path d="M7 2h17v20H7 M1 12h15 M11 6.500l5.500 5.500-5.500 5.500" stroke="#6b7280" stroke-width="2.200"/></svg>
<div style="position:absolute;left:1504.6px;top:905.5px;width:480.4000000000001px;height:4px;background:linear-gradient(90deg,#3b82f0 0%,#5a97f3 35%,rgba(120,165,245,0.35) 75%,rgba(120,165,245,0) 100%);border-radius:2px"></div>
<div style="position:absolute;left:1498.6px;top:901.5px;width:12px;height:12px;background:#3b82f0;border-radius:6px"></div>
<svg style="position:absolute;left:2053.0px;top:894.5px;" width="26" height="26" viewBox="0 0 26 26" fill="none"><circle cx="13" cy="13" r="11.400" stroke="#3b82f0" stroke-width="1.400"/><circle cx="13" cy="13" r="6.200" stroke="#3b82f0" stroke-width="4.200" fill="#fff"/></svg>
<div style="position:absolute;top:883.5px;height:48px;line-height:48px;font-size:31.6px;color:#1d1f24;font-weight:700;white-space:nowrap;left:2087.5px;">客户分布地图</div>
<svg style="position:absolute;left:2297.1px;top:895.5px;" width="14" height="24" viewBox="0 0 14 24" fill="none"><path d="M2 1.500l10 10.500-10 10.500" stroke="#6b7280" stroke-width="2.800"/></svg>
<div style="position:absolute;left:2328.1px;top:905.5px;width:506.9000000000001px;height:4px;background:linear-gradient(90deg,#3b82f0 0%,#5a97f3 35%,rgba(120,165,245,0.35) 75%,rgba(120,165,245,0) 100%);border-radius:2px"></div>
<div style="position:absolute;left:2322.1px;top:901.5px;width:12px;height:12px;background:#3b82f0;border-radius:6px"></div>
<div style="position:absolute;left:508px;top:967.5px;width:24px;height:24px;background:#2f60f5;border-radius:5px"></div>
<div style="position:absolute;top:962.0px;height:35px;line-height:35px;font-size:23.6px;color:#666;font-weight:350;white-space:nowrap;left:543px;">商机金额</div>
<div style="position:absolute;left:658px;top:967.5px;width:24px;height:24px;background:#5aabfb;border-radius:5px"></div>
<div style="position:absolute;top:962.0px;height:35px;line-height:35px;font-size:23.6px;color:#666;font-weight:350;white-space:nowrap;left:693px;">订单金额</div>
<div style="position:absolute;left:808px;top:967.5px;width:24px;height:24px;background:#63d5c6;border-radius:5px"></div>
<div style="position:absolute;top:962.0px;height:35px;line-height:35px;font-size:23.6px;color:#666;font-weight:350;white-space:nowrap;left:843px;">回款金额</div>
<svg style="position:absolute;left:0px;top:0px;pointer-events:none" width="2940" height="1666" viewBox="0 0 2940 1666" fill="none"><path d="M444.0 1029V1376" stroke="#d9dae0" stroke-width="2"/><path d="M528.2 1029V1376" stroke="#ececf2" stroke-width="1.5"/><path d="M612.4 1029V1376" stroke="#ececf2" stroke-width="1.5"/><path d="M696.6 1029V1376" stroke="#ececf2" stroke-width="1.5"/><path d="M780.8 1029V1376" stroke="#ececf2" stroke-width="1.5"/><path d="M865.0 1029V1376" stroke="#ececf2" stroke-width="1.5"/><path d="M949.2 1029V1376" stroke="#ececf2" stroke-width="1.5"/><path d="M1033.4 1029V1376" stroke="#ececf2" stroke-width="1.5"/></svg>
<div style="position:absolute;left:444px;top:1050px;width:530.3px;height:39.5px;background:#2f60f5"></div>
<div style="position:absolute;top:1052.0px;height:36px;line-height:36px;font-size:24px;color:#333;font-weight:350;white-space:nowrap;left:985.2915999999999px;">314.9万</div>
<div style="position:absolute;left:444px;top:1097.5px;width:101.7px;height:39.5px;background:#5aabfb"></div>
<div style="position:absolute;top:1099.5px;height:36px;line-height:36px;font-size:24px;color:#333;font-weight:350;white-space:nowrap;left:556.7136px;">60.4万</div>
<div style="position:absolute;left:444px;top:1143.5px;width:87.6px;height:39.5px;background:#63d5c6"></div>
<div style="position:absolute;top:1145.5px;height:36px;line-height:36px;font-size:24px;color:#333;font-weight:350;white-space:nowrap;left:542.568px;">52.0万</div>
<div style="position:absolute;left:444px;top:1223px;width:186.8px;height:39.5px;background:#2f60f5"></div>
<div style="position:absolute;top:1225.0px;height:36px;line-height:36px;font-size:24px;color:#333;font-weight:350;white-space:nowrap;left:641.7556px;">110.9万</div>
<div style="position:absolute;left:444px;top:1269.5px;width:13.0px;height:39.5px;background:#5aabfb"></div>
<div style="position:absolute;top:1271.5px;height:36px;line-height:36px;font-size:24px;color:#333;font-weight:350;white-space:nowrap;left:467.9668px;">7.7万</div>
<div style="position:absolute;left:444px;top:1316px;width:29.5px;height:39.5px;background:#63d5c6"></div>
<div style="position:absolute;top:1318.0px;height:36px;line-height:36px;font-size:24px;color:#333;font-weight:350;white-space:nowrap;left:484.47px;">17.5万</div>
<div style="position:absolute;top:1100.0px;height:34px;line-height:34px;font-size:23px;color:#666;font-weight:350;white-space:nowrap;right:2515px;text-align:right;">重要客户</div>
<div style="position:absolute;top:1272.5px;height:34px;line-height:34px;font-size:23px;color:#666;font-weight:350;white-space:nowrap;right:2515px;text-align:right;">普通客户</div>
<div style="position:absolute;top:1386.5px;height:36px;line-height:36px;font-size:24px;color:#999;font-weight:350;white-space:nowrap;left:-56.0px;width:1000px;text-align:center;">0</div>
<div style="position:absolute;top:1386.5px;height:36px;line-height:36px;font-size:24px;color:#999;font-weight:350;white-space:nowrap;left:28.200000000000045px;width:1000px;text-align:center;">50万</div>
<div style="position:absolute;top:1386.5px;height:36px;line-height:36px;font-size:24px;color:#999;font-weight:350;white-space:nowrap;left:112.39999999999998px;width:1000px;text-align:center;">100万</div>
<div style="position:absolute;top:1386.5px;height:36px;line-height:36px;font-size:24px;color:#999;font-weight:350;white-space:nowrap;left:196.60000000000002px;width:1000px;text-align:center;">150万</div>
<div style="position:absolute;top:1386.5px;height:36px;line-height:36px;font-size:24px;color:#999;font-weight:350;white-space:nowrap;left:280.79999999999995px;width:1000px;text-align:center;">200万</div>
<div style="position:absolute;top:1386.5px;height:36px;line-height:36px;font-size:24px;color:#999;font-weight:350;white-space:nowrap;left:365.0px;width:1000px;text-align:center;">250万</div>
<div style="position:absolute;top:1386.5px;height:36px;line-height:36px;font-size:24px;color:#999;font-weight:350;white-space:nowrap;left:449.20000000000005px;width:1000px;text-align:center;">300万</div>
<div style="position:absolute;top:1386.5px;height:36px;line-height:36px;font-size:24px;color:#999;font-weight:350;white-space:nowrap;left:533.4000000000001px;width:1000px;text-align:center;">350万</div>
<div style="position:absolute;left:1445px;top:993.5px;width:24px;height:24px;background:#2f60f5;border-radius:5px"></div>
<div style="position:absolute;top:988.0px;height:35px;line-height:35px;font-size:23.6px;color:#666;font-weight:350;white-space:nowrap;left:1480px;">重要客户</div>
<div style="position:absolute;left:1595px;top:993.5px;width:24px;height:24px;background:#5aabfb;border-radius:5px"></div>
<div style="position:absolute;top:988.0px;height:35px;line-height:35px;font-size:23.6px;color:#666;font-weight:350;white-space:nowrap;left:1630.5px;">普通客户</div>
<svg style="position:absolute;left:0px;top:0px;" width="2940" height="1666" viewBox="0 0 2940 1666" fill="none"><path d="M1590.14 1344.69 A130 130 0 1 1 1584.70 1084.80 L1584.70 1127.80 A87 87 0 1 0 1588.34 1301.72Z" fill="#2f60f5"/><path d="M1584.70 1084.80 A130 130 0 0 1 1590.14 1344.69 L1588.34 1301.72 A87 87 0 0 0 1584.70 1127.80Z" fill="#5aabfb"/><path d="M1395 1218.500L1455 1217.500" stroke="#2f60f5" stroke-width="2"/><path d="M1715 1211.500H1775" stroke="#5aabfb" stroke-width="2"/></svg>
<div style="position:absolute;top:1189.0px;height:35px;line-height:35px;font-size:23.4px;color:#333;font-weight:350;white-space:nowrap;right:1557px;text-align:right;">重要客户</div>
<div style="position:absolute;top:1212.5px;height:36px;line-height:36px;font-size:24px;color:#333;font-weight:350;white-space:nowrap;right:1557px;text-align:right;">112 (50.68%)</div>
<div style="position:absolute;top:1182.0px;height:35px;line-height:35px;font-size:23.4px;color:#333;font-weight:350;white-space:nowrap;left:1786px;">普通客户</div>
<div style="position:absolute;top:1205.5px;height:36px;line-height:36px;font-size:24px;color:#333;font-weight:350;white-space:nowrap;left:1786px;">109 (49.32%)</div>
<div style="position:absolute;left:301px;top:1467px;width:844.5px;height:597px;background:#fbfbfe;border:1.500px solid #d6d6e8;border-radius:9px;"></div>
<div style="position:absolute;left:1162.5px;top:1467px;width:844.5px;height:597px;background:#fbfbfe;border:1.500px solid #d6d6e8;border-radius:9px;"></div>
<div style="position:absolute;left:2022.7px;top:1467px;width:844.5px;height:597px;background:#fbfbfe;border:1.500px solid #d6d6e8;border-radius:9px;"></div>
<svg style="position:absolute;left:330.5px;top:1508.5px;" width="26" height="26" viewBox="0 0 26 26" fill="none"><circle cx="13" cy="13" r="11.400" stroke="#3b82f0" stroke-width="1.400"/><circle cx="13" cy="13" r="6.200" stroke="#3b82f0" stroke-width="4.200" fill="#fff"/></svg>
<div style="position:absolute;top:1497.5px;height:48px;line-height:48px;font-size:31.6px;color:#1d1f24;font-weight:700;white-space:nowrap;left:365px;">客户商机情况</div>
<svg style="position:absolute;left:574.6px;top:1509.5px;" width="14" height="24" viewBox="0 0 14 24" fill="none"><path d="M2 1.500l10 10.500-10 10.500" stroke="#6b7280" stroke-width="2.800"/></svg>
<div style="position:absolute;left:605.6px;top:1519.5px;width:504.4px;height:4px;background:linear-gradient(90deg,#3b82f0 0%,#5a97f3 35%,rgba(120,165,245,0.35) 75%,rgba(120,165,245,0) 100%);border-radius:2px"></div>
<div style="position:absolute;left:599.6px;top:1515.5px;width:12px;height:12px;background:#3b82f0;border-radius:6px"></div>
<svg style="position:absolute;left:1192.0px;top:1508.5px;" width="26" height="26" viewBox="0 0 26 26" fill="none"><circle cx="13" cy="13" r="11.400" stroke="#3b82f0" stroke-width="1.400"/><circle cx="13" cy="13" r="6.200" stroke="#3b82f0" stroke-width="4.200" fill="#fff"/></svg>
<div style="position:absolute;top:1497.5px;height:48px;line-height:48px;font-size:31.6px;color:#1d1f24;font-weight:700;white-space:nowrap;left:1226.5px;">新增客户数排行榜top10</div>
<svg style="position:absolute;left:1586.5px;top:1509.5px;" width="14" height="24" viewBox="0 0 14 24" fill="none"><path d="M2 1.500l10 10.500-10 10.500" stroke="#6b7280" stroke-width="2.800"/></svg>
<div style="position:absolute;left:1617.5px;top:1519.5px;width:367.5px;height:4px;background:linear-gradient(90deg,#3b82f0 0%,#5a97f3 35%,rgba(120,165,245,0.35) 75%,rgba(120,165,245,0) 100%);border-radius:2px"></div>
<div style="position:absolute;left:1611.5px;top:1515.5px;width:12px;height:12px;background:#3b82f0;border-radius:6px"></div>
<svg style="position:absolute;left:2053.0px;top:1508.5px;" width="26" height="26" viewBox="0 0 26 26" fill="none"><circle cx="13" cy="13" r="11.400" stroke="#3b82f0" stroke-width="1.400"/><circle cx="13" cy="13" r="6.200" stroke="#3b82f0" stroke-width="4.200" fill="#fff"/></svg>
<div style="position:absolute;top:1497.5px;height:48px;line-height:48px;font-size:31.6px;color:#1d1f24;font-weight:700;white-space:nowrap;left:2087.5px;">销售漏斗（商机金额）</div>
<svg style="position:absolute;left:2424.5px;top:1509.5px;" width="14" height="24" viewBox="0 0 14 24" fill="none"><path d="M2 1.500l10 10.500-10 10.500" stroke="#6b7280" stroke-width="2.800"/></svg>
<div style="position:absolute;left:2455.5px;top:1519.5px;width:379.5px;height:4px;background:linear-gradient(90deg,#3b82f0 0%,#5a97f3 35%,rgba(120,165,245,0.35) 75%,rgba(120,165,245,0) 100%);border-radius:2px"></div>
<div style="position:absolute;left:2449.5px;top:1515.5px;width:12px;height:12px;background:#3b82f0;border-radius:6px"></div>
<div style="position:absolute;left:523px;top:1581.5px;width:24px;height:24px;background:#2f60f5;border-radius:5px"></div>
<div style="position:absolute;top:1576.0px;height:35px;line-height:35px;font-size:23.6px;color:#666;font-weight:350;white-space:nowrap;left:558px;">预计成交客户数</div>
<div style="position:absolute;left:745px;top:1581.5px;width:24px;height:24px;background:#5aabfb;border-radius:5px"></div>
<div style="position:absolute;top:1576.0px;height:35px;line-height:35px;font-size:23.6px;color:#666;font-weight:350;white-space:nowrap;left:780px;">已成交客户数</div>
<div style="position:absolute;top:1628.5px;height:36px;line-height:36px;font-size:24px;color:#999;font-weight:350;white-space:nowrap;left:-114px;width:1000px;text-align:center;">70</div>
<div style="position:absolute;top:1630.5px;height:36px;line-height:36px;font-size:24px;color:#333;font-weight:350;white-space:nowrap;left:41px;width:1000px;text-align:center;">63</div>
<svg style="position:absolute;left:0px;top:0px;" width="2940" height="1666" viewBox="0 0 2940 1666" fill="none"><path d="M1282 1603V1666" stroke="#d9dae0" stroke-width="2"/><path d="M1364 1603V1666" stroke="#ececf2" stroke-width="1.5"/><path d="M1446 1603V1666" stroke="#ececf2" stroke-width="1.5"/><path d="M1528 1603V1666" stroke="#ececf2" stroke-width="1.5"/><path d="M1610 1603V1666" stroke="#ececf2" stroke-width="1.5"/><path d="M1692 1603V1666" stroke="#ececf2" stroke-width="1.5"/><path d="M1774 1603V1666" stroke="#ececf2" stroke-width="1.5"/><path d="M1856 1603V1666" stroke="#ececf2" stroke-width="1.5"/><path d="M1938 1603V1666" stroke="#ececf2" stroke-width="1.5"/></svg>
<div style="position:absolute;left:1282px;top:1619px;width:605px;height:40px;background:#2f60f5"></div>
<div style="position:absolute;top:1616.0px;height:34px;line-height:34px;font-size:23px;color:#666;font-weight:350;white-space:nowrap;right:1675px;text-align:right;">徐莱</div>
<svg style="position:absolute;left:0px;top:0px;" width="2940" height="1666" viewBox="0 0 2940 1666" fill="none"><path d="M2112.500 1584H2659L2560 1644H2211.500Z" fill="#2f60f5"/></svg>
<div style="position:absolute;top:1626.5px;height:36px;line-height:36px;font-size:24px;color:#222;font-weight:350;white-space:nowrap;left:1885.5px;width:1000px;text-align:center;">159.00万</div>
<div style="position:absolute;top:1628.0px;height:35px;line-height:35px;font-size:23.6px;color:#222;font-weight:350;white-space:nowrap;left:2594px;">验证客户</div>
<svg style="position:absolute;left:0px;top:0px;" width="2940" height="1666" viewBox="0 0 2940 1666" fill="none"><g stroke="#1c2c5e" stroke-width="1.200" stroke-linejoin="round"><path d="M2311.2 1059.2L2197.1 1059.2L2197.1 1067.7L2200.2 1070.5L2201.6 1078.9L2204.2 1086.0L2204.9 1090.2L2201.6 1093.0L2200.2 1097.2L2198.5 1103.6L2190.1 1109.9L2178.8 1115.5L2174.6 1118.4L2167.6 1120.5L2162.6 1124.0L2161.9 1126.8L2153.5 1129.6L2152.1 1126.8L2145.1 1128.2L2142.2 1131.7L2135.9 1134.5L2135.2 1139.5L2131.3 1143.0L2133.1 1148.6L2133.8 1152.1L2142.2 1153.5L2143.6 1162.0L2146.5 1167.6L2145.8 1171.1L2141.5 1172.6L2141.5 1174.7L2149.3 1176.1L2154.9 1182.4L2155.6 1187.3L2159.1 1190.9L2166.2 1193.7L2171.8 1195.8L2177.4 1197.2L2178.8 1201.4L2183.1 1207.0L2187.3 1209.9L2193.6 1209.2L2197.1 1204.2L2200.2 1197.9L2207.0 1196.5L2212.6 1197.2L2219.7 1193.7L2224.6 1193.0L2228.1 1195.1L2233.7 1196.5L2239.4 1195.8L2246.4 1192.3L2254.9 1188.7L2260.5 1185.9L2268.9 1183.8L2277.4 1182.4L2283.0 1182.4L2288.7 1183.8L2295.0 1187.3L2302.7 1186.6L2309.8 1187.3L2308.4 1182.4L2307.0 1180.3L2308.4 1176.1L2311.2 1174.7L2309.8 1169.0L2305.5 1162.0L2304.1 1157.8L2301.3 1155.7L2311.2 1152.1L2323.8 1147.2L2326.0 1139.5L2328.8 1129.6L2332.3 1126.1L2337.9 1121.9L2343.6 1116.2L2347.8 1112.7L2352.7 1110.6L2360.5 1105.7L2364.0 1097.2L2360.5 1090.2L2356.2 1081.7L2353.4 1076.8L2347.8 1074.0L2342.2 1070.5L2336.5 1067.0L2325.3 1065.6L2311.2 1063.7Z" fill="#7b9bf6"><title>新疆</title></path><path d="M2193.6 1209.2L2186.6 1210.6L2184.5 1214.1L2185.2 1221.1L2188.0 1226.1L2188.7 1232.4L2184.5 1234.5L2181.0 1236.6L2183.1 1243.7L2185.2 1252.1L2190.1 1256.3L2197.1 1260.4L2208.4 1270.3L2212.6 1265.3L2217.6 1266.7L2222.5 1272.4L2232.3 1280.8L2235.9 1280.1L2242.2 1286.5L2249.2 1291.4L2256.3 1294.9L2258.4 1298.4L2264.7 1296.3L2271.8 1300.5L2283.0 1297.0L2286.5 1299.1L2287.2 1306.2L2289.4 1308.3L2290.8 1301.9L2295.7 1295.6L2302.7 1295.6L2311.2 1297.7L2315.4 1299.1L2319.6 1306.2L2321.0 1313.2L2328.1 1312.5L2336.5 1311.8L2342.2 1304.8L2352.0 1297.7L2359.0 1294.2L2364.7 1294.9L2373.1 1300.5L2375.2 1292.1L2377.3 1290.7L2383.0 1294.9L2387.2 1287.9L2392.1 1282.2L2390.7 1268.2L2388.6 1254.1L2385.1 1244.2L2383.0 1240.0L2380.2 1236.6L2375.2 1234.5L2373.8 1238.0L2371.7 1243.7L2366.8 1244.4L2365.4 1247.2L2361.9 1248.6L2360.5 1245.1L2356.2 1243.7L2352.0 1238.0L2345.0 1235.2L2339.3 1236.6L2332.3 1233.8L2325.3 1233.1L2318.2 1229.6L2311.2 1227.5L2305.5 1223.9L2299.9 1219.7L2296.4 1214.1L2297.1 1207.0L2295.0 1201.4L2293.6 1194.4L2295.0 1187.3L2288.7 1183.8L2283.0 1182.4L2277.4 1182.4L2268.9 1183.8L2260.5 1185.9L2254.9 1188.7L2246.4 1192.3L2239.4 1195.8L2233.7 1196.5L2228.1 1195.1L2224.6 1193.0L2219.7 1193.7L2212.6 1197.2L2207.0 1196.5L2200.2 1197.9L2197.1 1204.2L2193.6 1209.2Z" fill="#c4cff8"><title>西藏</title></path><path d="M2301.3 1155.7L2311.2 1152.1L2323.8 1147.2L2330.9 1145.8L2333.7 1149.3L2339.3 1152.1L2345.0 1156.4L2352.0 1156.4L2363.3 1159.2L2366.8 1156.4L2370.3 1147.9L2373.1 1145.8L2378.1 1147.2L2383.0 1148.6L2388.6 1147.2L2394.2 1150.7L2401.3 1155.7L2408.3 1159.9L2416.8 1164.8L2423.8 1169.0L2428.0 1174.7L2429.4 1181.7L2431.6 1186.6L2429.4 1194.4L2426.6 1198.6L2423.8 1204.2L2421.0 1209.9L2423.1 1214.1L2419.6 1216.9L2416.1 1215.5L2411.8 1212.0L2409.7 1214.8L2413.2 1219.0L2418.2 1221.1L2420.3 1226.1L2416.8 1227.5L2413.2 1228.2L2411.8 1234.5L2406.9 1235.9L2401.3 1233.1L2397.8 1233.8L2392.8 1228.2L2388.6 1225.4L2385.8 1219.7L2383.0 1214.8L2378.1 1213.4L2374.5 1218.3L2375.2 1223.9L2373.8 1231.0L2375.2 1234.5L2373.8 1238.0L2371.7 1243.7L2366.8 1244.4L2365.4 1247.2L2361.9 1248.6L2360.5 1245.1L2356.2 1243.7L2352.0 1238.0L2345.0 1235.2L2339.3 1236.6L2332.3 1233.8L2325.3 1233.1L2318.2 1229.6L2311.2 1227.5L2305.5 1223.9L2299.9 1219.7L2296.4 1214.1L2297.1 1207.0L2295.0 1201.4L2293.6 1194.4L2295.0 1187.3L2302.7 1186.6L2309.8 1187.3L2308.4 1182.4L2307.0 1180.3L2308.4 1176.1L2311.2 1174.7L2309.8 1169.0L2305.5 1162.0L2304.1 1157.8L2301.3 1155.7Z" fill="#8fa9f7"><title>青海</title></path><path d="M2301.3 1155.7L2311.2 1152.1L2323.8 1147.2L2326.0 1139.5L2328.8 1129.6L2332.3 1126.1L2337.9 1121.9L2343.6 1116.2L2347.8 1112.7L2352.7 1110.6L2360.5 1105.7L2364.0 1097.2L2371.7 1096.5L2374.5 1105.7L2378.1 1114.1L2384.4 1125.4L2388.6 1124.0L2395.6 1121.9L2401.3 1122.6L2402.7 1126.8L2399.2 1131.7L2396.4 1135.2L2401.3 1138.1L2405.5 1142.3L2409.7 1146.5L2414.0 1148.6L2418.2 1151.4L2422.4 1147.9L2429.4 1145.1L2437.9 1142.3L2442.1 1143.0L2442.8 1150.7L2437.9 1156.4L2436.5 1161.3L2440.7 1165.5L2444.9 1168.3L2445.8 1169.0L2448.6 1171.9L2452.1 1177.5L2455.6 1184.5L2457.7 1190.2L2460.5 1195.1L2464.8 1197.2L2467.6 1193.7L2469.0 1188.7L2471.1 1184.5L2467.6 1178.9L2469.0 1174.7L2476.0 1173.3L2484.5 1178.9L2489.4 1183.1L2488.7 1194.4L2484.5 1198.6L2478.8 1202.8L2469.0 1201.4L2466.2 1208.5L2469.0 1215.5L2467.6 1222.5L2461.9 1226.8L2460.5 1232.4L2456.3 1231.7L2453.5 1234.5L2446.5 1233.1L2445.1 1226.8L2440.8 1221.8L2435.2 1218.3L2430.3 1214.1L2426.0 1218.3L2425.3 1223.9L2420.3 1226.1L2420.3 1226.1L2418.2 1221.1L2413.2 1219.0L2409.7 1214.8L2411.8 1212.0L2416.1 1215.5L2419.6 1216.9L2423.1 1214.1L2421.0 1209.9L2423.8 1204.2L2426.6 1198.6L2429.4 1194.4L2431.6 1186.6L2429.4 1181.7L2428.0 1174.7L2423.8 1169.0L2416.8 1164.8L2408.3 1159.9L2401.3 1155.7L2394.2 1150.7L2388.6 1147.2L2383.0 1148.6L2378.1 1147.2L2373.1 1145.8L2370.3 1147.9L2366.8 1156.4L2363.3 1159.2L2352.0 1156.4L2345.0 1156.4L2339.3 1152.1L2333.7 1149.3L2330.9 1145.8Z" fill="#dfe4f8"><title>甘肃</title></path><path d="M2371.7 1096.5L2381.6 1097.2L2395.6 1097.9L2408.4 1098.6L2418.3 1101.5L2428.2 1107.1L2439.4 1109.2L2447.9 1111.3L2452.1 1112.0L2460.5 1107.8L2470.4 1103.6L2480.2 1100.1L2490.1 1100.1L2498.5 1098.6L2507.0 1094.4L2512.6 1090.2L2519.7 1085.3L2522.5 1082.5L2521.8 1077.5L2519.0 1073.3L2521.1 1067.7L2526.7 1064.9L2530.9 1067.0L2538.0 1069.1L2545.0 1067.0L2549.2 1063.7L2549.2 1059.2L2626.7 1059.2L2626.7 1063.7L2627.4 1070.5L2630.9 1076.1L2635.1 1074.0L2637.9 1078.9L2640.7 1085.3L2642.9 1088.1L2637.9 1091.6L2630.9 1095.1L2622.4 1098.6L2615.4 1102.2L2609.8 1105.0L2605.5 1109.9L2602.7 1103.6L2598.5 1104.3L2597.1 1111.3L2595.0 1116.9L2588.7 1115.5L2585.8 1108.5L2583.0 1101.5L2580.2 1099.3L2574.6 1102.2L2573.2 1107.1L2567.5 1108.5L2561.9 1110.6L2554.9 1112.7L2552.0 1107.1L2548.5 1106.4L2546.4 1111.3L2543.6 1114.1L2542.9 1121.2L2545.0 1125.4L2547.1 1128.9L2540.8 1128.9L2535.2 1130.3L2526.7 1132.4L2522.5 1136.7L2515.4 1140.9L2511.2 1142.3L2507.0 1143.0L2504.2 1145.1L2498.5 1150.7L2495.7 1156.4L2491.5 1159.2L2490.1 1164.1L2484.5 1165.5L2478.8 1164.1L2477.4 1164.1L2470.4 1159.2L2469.0 1153.5L2471.8 1147.9L2469.0 1143.7L2463.4 1147.9L2460.5 1159.2L2456.3 1166.2L2445.8 1169.0L2444.9 1168.3L2440.7 1165.5L2436.5 1161.3L2437.9 1156.4L2442.8 1150.7L2442.1 1143.0L2437.9 1142.3L2429.4 1145.1L2422.4 1147.9L2418.2 1151.4L2414.0 1148.6L2409.7 1146.5L2405.5 1142.3L2401.3 1138.1L2396.4 1135.2L2399.2 1131.7L2402.7 1126.8L2401.3 1122.6L2395.6 1121.9L2388.6 1124.0L2384.4 1125.4L2378.1 1114.1L2374.5 1105.7L2371.7 1096.5Z" fill="#c4cff8"><title>内蒙古</title></path><path d="M2477.4 1164.1L2470.4 1159.2L2469.0 1153.5L2471.8 1147.9L2469.0 1143.7L2463.4 1147.9L2460.5 1159.2L2456.3 1166.2L2445.8 1169.0L2448.6 1171.9L2452.1 1177.5L2455.6 1184.5L2457.7 1190.2L2460.5 1195.1L2464.8 1197.2L2467.6 1193.7L2469.0 1188.7L2471.1 1184.5L2467.6 1178.9L2469.0 1174.7L2476.0 1173.3L2477.4 1164.1Z" fill="#dfe4f8"><title>宁夏</title></path><path d="M2477.4 1164.1L2478.8 1164.1L2484.5 1165.5L2490.1 1164.1L2491.5 1159.2L2495.7 1156.4L2498.5 1150.7L2504.2 1145.1L2507.0 1143.0L2511.2 1142.3L2515.4 1140.9L2512.6 1147.9L2510.5 1153.5L2508.4 1159.2L2509.1 1166.2L2507.7 1174.7L2507.0 1181.7L2507.7 1190.2L2507.0 1197.2L2506.3 1202.8L2505.6 1207.8L2508.4 1211.3L2511.2 1216.9L2514.0 1222.5L2512.6 1226.1L2507.0 1226.8L2498.5 1227.5L2500.7 1231.0L2504.2 1233.1L2502.8 1236.6L2498.5 1239.4L2499.3 1243.7L2500.7 1247.9L2497.1 1247.2L2487.3 1243.7L2484.5 1242.2L2484.5 1238.0L2478.8 1236.6L2473.2 1233.8L2467.6 1233.1L2460.5 1232.4L2461.9 1226.8L2467.6 1222.5L2469.0 1215.5L2466.2 1208.5L2469.0 1201.4L2478.8 1202.8L2484.5 1198.6L2488.7 1194.4L2489.4 1183.1L2484.5 1178.9L2476.0 1173.3L2477.4 1164.1Z" fill="#c9d3f8"><title>陕西</title></path><path d="M2515.4 1140.9L2522.5 1136.7L2526.7 1132.4L2535.2 1130.3L2540.8 1128.9L2547.1 1128.9L2548.5 1131.0L2545.0 1133.8L2547.8 1138.1L2548.5 1142.3L2546.4 1146.5L2542.2 1150.7L2540.8 1156.4L2541.5 1162.0L2544.3 1166.2L2543.6 1173.3L2541.5 1178.9L2540.8 1183.8L2540.8 1190.2L2538.7 1194.4L2532.3 1197.2L2526.7 1200.0L2519.7 1202.8L2512.6 1205.6L2505.6 1207.8L2506.3 1202.8L2507.0 1197.2L2507.7 1190.2L2507.0 1181.7L2507.7 1174.7L2509.1 1166.2L2508.4 1159.2L2510.5 1153.5L2512.6 1147.9L2515.4 1140.9Z" fill="#5781f6"><title>山西</title></path><path d="M2547.1 1128.9L2545.0 1125.4L2542.9 1121.2L2543.6 1114.1L2546.4 1111.3L2548.5 1106.4L2552.0 1107.1L2554.9 1112.7L2561.9 1110.6L2567.5 1108.5L2573.2 1107.1L2574.6 1102.2L2580.2 1099.3L2583.0 1101.5L2585.8 1108.5L2588.7 1115.5L2595.0 1116.9L2594.3 1121.2L2599.9 1126.8L2602.7 1133.8L2597.1 1138.1L2592.9 1142.3L2588.7 1146.5L2583.0 1152.1L2581.6 1155.0L2584.4 1158.5L2580.2 1160.6L2574.6 1163.4L2568.9 1167.6L2563.3 1174.7L2559.1 1179.6L2557.7 1184.5L2556.3 1187.3L2552.0 1186.6L2546.4 1184.5L2540.8 1183.8L2541.5 1178.9L2543.6 1173.3L2544.3 1166.2L2541.5 1162.0L2540.8 1156.4L2542.2 1150.7L2546.4 1146.5L2548.5 1142.3L2547.8 1138.1L2545.0 1133.8L2548.5 1131.0L2547.1 1128.9Z" fill="#dde3f8"><title>河北</title></path><path d="M2595.0 1116.9L2597.1 1111.3L2598.5 1104.3L2602.7 1103.6L2605.5 1109.9L2609.8 1105.0L2615.4 1102.2L2622.4 1098.6L2630.9 1095.1L2637.9 1091.6L2642.9 1088.1L2647.8 1091.6L2654.8 1093.0L2657.6 1100.1L2660.5 1108.5L2663.3 1116.9L2664.7 1121.9L2660.5 1124.0L2653.4 1129.6L2647.8 1133.8L2646.4 1136.7L2639.3 1139.5L2632.3 1142.3L2626.7 1145.1L2622.4 1148.6L2618.2 1150.7L2621.0 1145.1L2619.6 1139.5L2623.8 1133.8L2627.4 1128.2L2625.3 1124.0L2621.0 1122.6L2616.8 1124.0L2611.2 1129.6L2607.0 1132.4L2602.7 1133.8L2599.9 1126.8L2594.3 1121.2L2595.0 1116.9Z" fill="#d3dbf9"><title>辽宁</title></path><path d="M2642.9 1088.1L2640.7 1085.3L2637.9 1078.9L2635.1 1074.0L2630.9 1076.1L2627.4 1070.5L2626.7 1063.7L2626.7 1059.2L2675.9 1059.2L2675.9 1063.7L2678.1 1069.1L2683.0 1074.7L2688.6 1076.1L2692.1 1073.3L2697.1 1085.3L2704.1 1081.7L2709.7 1079.6L2714.7 1086.7L2720.3 1086.7L2719.6 1091.6L2718.2 1095.8L2713.2 1098.6L2711.8 1097.2L2706.9 1095.8L2705.5 1101.5L2699.9 1104.3L2695.6 1107.1L2688.6 1109.9L2690.0 1114.1L2684.4 1115.5L2678.8 1112.7L2674.5 1111.3L2670.3 1115.5L2666.1 1119.8L2664.7 1121.9L2663.3 1116.9L2660.5 1108.5L2657.6 1100.1L2654.8 1093.0L2647.8 1091.6L2642.9 1088.1Z" fill="#d3dbf9"><title>吉林</title></path><path d="M2675.9 1059.2L2675.9 1063.7L2678.1 1069.1L2683.0 1074.7L2688.6 1076.1L2692.1 1073.3L2697.1 1085.3L2704.1 1081.7L2709.7 1079.6L2714.7 1086.7L2720.3 1086.7L2721.0 1080.3L2719.6 1071.9L2722.4 1067.7L2729.4 1065.6L2740.7 1064.6L2740.7 1059.2Z" fill="#cfd8f8"><title>黑龙江</title></path><path d="M2584.4 1158.5L2588.7 1159.9L2592.9 1162.0L2595.7 1166.2L2597.1 1170.4L2601.3 1172.6L2605.5 1169.0L2609.8 1165.5L2614.0 1164.1L2619.6 1166.2L2625.3 1167.6L2630.9 1169.7L2632.3 1171.9L2630.9 1176.1L2625.3 1177.5L2619.6 1180.3L2615.4 1183.1L2611.2 1187.3L2607.0 1190.2L2604.1 1195.8L2599.9 1201.4L2597.1 1204.2L2592.9 1207.0L2587.2 1209.9L2581.6 1208.5L2576.0 1209.9L2573.2 1207.0L2568.9 1208.5L2564.7 1205.6L2559.1 1202.8L2553.5 1200.0L2557.0 1194.4L2556.3 1187.3L2557.7 1184.5L2559.1 1179.6L2563.3 1174.7L2568.9 1167.6L2574.6 1163.4L2580.2 1160.6L2584.4 1158.5Z" fill="#7d9cf6"><title>山东</title></path><path d="M2540.8 1183.8L2546.4 1184.5L2552.0 1186.6L2556.3 1187.3L2557.0 1194.4L2553.5 1200.0L2559.1 1202.8L2564.7 1205.6L2568.9 1208.5L2570.4 1214.1L2566.1 1216.9L2560.5 1215.5L2559.1 1221.1L2557.0 1228.2L2554.2 1230.3L2557.0 1235.2L2561.9 1236.6L2563.3 1242.2L2562.6 1247.9L2559.1 1250.0L2556.3 1251.3L2547.8 1247.9L2543.6 1245.1L2540.8 1239.4L2535.2 1238.0L2529.5 1239.4L2525.3 1238.0L2521.1 1233.8L2516.9 1229.6L2512.6 1226.1L2514.0 1222.5L2511.2 1216.9L2508.4 1211.3L2505.6 1207.8L2512.6 1205.6L2519.7 1202.8L2526.7 1200.0L2532.3 1197.2L2538.7 1194.4L2540.8 1190.2L2540.8 1183.8Z" fill="#dbe1f9"><title>河南</title></path><path d="M2597.1 1204.2L2601.3 1208.5L2605.5 1214.1L2609.8 1221.1L2612.6 1228.2L2615.4 1235.2L2619.6 1240.8L2623.8 1245.1L2623.8 1246.5L2619.6 1245.6L2617.5 1252.7L2615.4 1255.5L2608.4 1258.3L2602.7 1255.5L2595.0 1252.7L2592.2 1248.4L2589.4 1244.2L2590.1 1239.4L2594.3 1238.0L2597.1 1234.5L2594.3 1231.0L2588.7 1231.0L2585.8 1225.4L2583.0 1219.7L2577.4 1215.5L2573.2 1211.3L2568.9 1208.5L2573.2 1207.0L2576.0 1209.9L2581.6 1208.5L2587.2 1209.9L2592.9 1207.0L2597.1 1204.2Z" fill="#cbd5f8"><title>江苏</title></path><path d="M2623.8 1246.5L2626.0 1252.7L2623.8 1258.3L2619.6 1262.5L2615.4 1255.5L2617.5 1252.7L2619.6 1245.6L2623.8 1246.5Z" fill="#e6e9f0"><title>上海</title></path><path d="M2568.9 1208.5L2573.2 1211.3L2577.4 1215.5L2583.0 1219.7L2585.8 1225.4L2588.7 1231.0L2594.3 1231.0L2597.1 1234.5L2594.3 1238.0L2590.1 1239.4L2589.4 1244.2L2592.2 1248.4L2595.0 1252.7L2602.7 1255.5L2599.9 1261.1L2597.1 1268.2L2594.3 1272.4L2588.7 1278.0L2584.4 1276.6L2580.2 1273.8L2576.0 1273.1L2573.2 1270.3L2568.9 1270.3L2566.1 1271.7L2564.7 1266.7L2564.0 1261.1L2561.9 1255.5L2556.3 1251.3L2559.1 1250.0L2562.6 1247.9L2563.3 1242.2L2561.9 1236.6L2557.0 1235.2L2554.2 1230.3L2557.0 1228.2L2559.1 1221.1L2560.5 1215.5L2566.1 1216.9L2570.4 1214.1L2568.9 1208.5Z" fill="#d0d9f8"><title>安徽</title></path><path d="M2500.7 1247.9L2499.3 1243.7L2498.5 1239.4L2502.8 1236.6L2504.2 1233.1L2500.7 1231.0L2498.5 1227.5L2507.0 1226.8L2512.6 1226.1L2516.9 1229.6L2521.1 1233.8L2525.3 1238.0L2529.5 1239.4L2535.2 1238.0L2540.8 1239.4L2543.6 1245.1L2547.8 1247.9L2556.3 1251.3L2561.9 1255.5L2564.0 1261.1L2564.7 1266.7L2566.1 1271.7L2561.9 1273.1L2557.7 1275.2L2552.0 1278.0L2546.4 1280.8L2543.6 1282.2L2540.8 1278.0L2539.4 1273.8L2535.2 1276.6L2532.3 1273.1L2526.7 1274.5L2522.5 1271.7L2516.9 1270.3L2511.2 1269.6L2508.4 1273.1L2504.2 1273.8L2498.5 1275.2L2495.7 1278.7L2492.9 1275.2L2490.1 1272.4L2488.0 1266.7L2491.5 1262.5L2498.5 1259.7L2503.5 1256.9L2504.2 1252.7L2500.7 1247.9Z" fill="#7193f6"><title>湖北</title></path><path d="M2602.7 1255.5L2608.4 1258.3L2615.4 1255.5L2619.6 1262.5L2623.8 1265.3L2626.7 1269.6L2625.3 1276.6L2623.8 1282.2L2622.4 1289.3L2619.6 1294.9L2615.4 1299.1L2611.2 1306.2L2608.4 1309.0L2604.1 1306.2L2598.5 1301.9L2594.3 1300.5L2591.5 1294.9L2588.7 1287.9L2585.8 1282.2L2588.7 1278.0L2594.3 1272.4L2597.1 1268.2L2599.9 1261.1L2602.7 1255.5Z" fill="#d0d9f8"><title>浙江</title></path><path d="M2566.1 1271.7L2568.9 1270.3L2573.2 1270.3L2576.0 1273.1L2580.2 1273.8L2584.4 1276.6L2588.7 1278.0L2585.8 1282.2L2588.7 1287.9L2591.5 1294.9L2585.8 1297.7L2580.2 1299.1L2576.0 1303.4L2574.6 1310.4L2571.1 1316.0L2568.9 1323.1L2566.1 1330.1L2564.0 1337.1L2564.0 1340.0L2560.5 1342.8L2554.9 1341.4L2549.2 1344.2L2546.4 1340.0L2544.3 1332.9L2545.0 1324.5L2543.6 1316.0L2540.8 1307.6L2540.1 1301.9L2542.2 1296.3L2545.0 1290.7L2544.3 1285.1L2543.6 1282.2L2546.4 1280.8L2552.0 1278.0L2557.7 1275.2L2561.9 1273.1L2566.1 1271.7Z" fill="#d5dcf9"><title>江西</title></path><path d="M2591.5 1294.9L2594.3 1300.5L2598.5 1301.9L2604.1 1306.2L2608.4 1309.0L2607.0 1313.2L2604.1 1318.8L2602.7 1325.9L2601.3 1331.5L2597.1 1337.1L2592.9 1341.4L2588.7 1345.6L2584.4 1351.2L2580.2 1355.4L2576.0 1358.3L2574.6 1352.6L2573.2 1347.0L2570.4 1342.8L2564.0 1340.0L2564.0 1337.1L2566.1 1330.1L2568.9 1323.1L2571.1 1316.0L2574.6 1310.4L2576.0 1303.4L2580.2 1299.1L2585.8 1297.7L2591.5 1294.9Z" fill="#d5dcf9"><title>福建</title></path><path d="M2495.7 1278.7L2498.5 1275.2L2504.2 1273.8L2508.4 1273.1L2511.2 1269.6L2516.9 1270.3L2522.5 1271.7L2526.7 1274.5L2532.3 1273.1L2535.2 1276.6L2539.4 1273.8L2540.8 1278.0L2543.6 1282.2L2544.3 1285.1L2545.0 1290.7L2542.2 1296.3L2540.1 1301.9L2540.8 1307.6L2543.6 1316.0L2545.0 1324.5L2544.3 1332.9L2539.4 1332.9L2533.7 1334.3L2529.5 1337.1L2525.3 1340.0L2522.5 1342.8L2518.3 1338.5L2515.4 1332.9L2516.9 1325.9L2514.7 1321.7L2509.8 1320.2L2505.6 1324.5L2501.4 1323.1L2498.5 1324.5L2497.1 1318.8L2496.4 1311.8L2491.5 1309.0L2495.7 1303.4L2497.1 1296.3L2495.7 1290.7L2495.7 1278.7Z" fill="#cdd6f8"><title>湖南</title></path><path d="M2500.7 1247.9L2497.1 1247.2L2487.3 1243.7L2484.5 1242.3L2483.1 1248.4L2478.8 1258.3L2474.6 1268.2L2461.9 1265.3L2457.7 1271.0L2456.3 1278.0L2460.5 1283.6L2466.2 1287.9L2470.4 1286.5L2476.0 1282.2L2483.1 1281.5L2487.3 1286.5L2491.5 1294.2L2495.7 1290.7L2495.7 1278.7L2492.9 1275.2L2490.1 1272.4L2488.0 1266.7L2491.5 1262.5L2498.5 1259.7L2503.5 1256.9L2504.2 1252.7L2500.7 1247.9Z" fill="#dde3f8"><title>重庆</title></path><path d="M2495.7 1290.7L2491.5 1294.2L2487.3 1286.5L2483.1 1281.5L2476.0 1282.2L2470.4 1286.5L2466.2 1287.9L2463.4 1285.8L2459.1 1287.9L2460.5 1292.1L2464.8 1296.3L2461.9 1299.8L2454.9 1300.5L2453.5 1304.8L2447.9 1306.2L2442.2 1307.6L2439.4 1310.4L2440.8 1316.0L2445.1 1317.4L2446.5 1324.5L2447.9 1330.1L2450.7 1337.1L2449.3 1342.8L2452.1 1340.0L2456.3 1338.5L2461.9 1341.4L2464.8 1338.5L2470.4 1335.7L2474.6 1331.5L2478.8 1332.9L2483.1 1335.7L2487.3 1332.9L2492.9 1328.7L2498.5 1324.5L2497.1 1318.8L2496.4 1311.8L2491.5 1309.0L2495.7 1303.4L2497.1 1296.3L2495.7 1290.7Z" fill="#dbe1f9"><title>贵州</title></path><path d="M2375.2 1234.5L2373.8 1231.0L2375.2 1223.9L2374.5 1218.3L2378.1 1213.4L2383.0 1214.8L2385.8 1219.7L2388.6 1225.4L2392.8 1228.2L2397.8 1233.8L2401.3 1233.1L2406.9 1235.9L2411.8 1234.5L2413.2 1228.2L2416.8 1227.5L2420.3 1226.1L2420.3 1226.1L2425.3 1223.9L2426.0 1218.3L2430.3 1214.1L2435.2 1218.3L2440.8 1221.8L2445.1 1226.8L2446.5 1233.1L2453.5 1234.5L2456.3 1231.7L2460.5 1232.4L2467.6 1233.1L2473.2 1233.8L2478.8 1236.6L2484.5 1238.0L2484.5 1242.2L2483.1 1248.4L2478.8 1258.3L2474.6 1268.2L2461.9 1265.3L2457.7 1271.0L2456.3 1278.0L2460.5 1283.6L2466.2 1287.9L2463.4 1285.8L2459.1 1287.9L2460.5 1292.1L2464.8 1296.3L2461.9 1299.8L2454.9 1300.5L2452.8 1297.0L2446.5 1294.9L2445.8 1289.3L2440.8 1289.3L2440.7 1294.9L2437.9 1300.5L2435.1 1306.2L2432.3 1313.2L2429.4 1319.5L2425.2 1321.7L2419.6 1323.1L2416.8 1317.4L2411.1 1306.2L2406.9 1299.1L2401.3 1292.1L2397.1 1286.5L2392.1 1282.2L2390.7 1268.2L2388.6 1254.1L2385.1 1244.2L2383.0 1240.0L2380.2 1236.6L2375.2 1234.5Z" fill="#a3b8f8"><title>四川</title></path><path d="M2392.1 1282.2L2387.2 1287.9L2383.0 1294.9L2392.1 1282.2L2397.1 1286.5L2401.3 1292.1L2406.9 1299.1L2411.1 1306.2L2416.8 1317.4L2419.6 1323.1L2425.2 1321.7L2429.4 1319.5L2432.3 1313.2L2435.1 1306.2L2437.9 1300.5L2440.7 1294.9L2440.8 1289.3L2445.8 1289.3L2446.5 1294.9L2452.8 1297.0L2454.9 1300.5L2453.5 1304.8L2447.9 1306.2L2442.2 1307.6L2439.4 1310.4L2440.8 1316.0L2445.1 1317.4L2446.5 1324.5L2447.9 1330.1L2450.7 1337.1L2449.3 1342.8L2453.5 1347.0L2459.1 1349.8L2463.4 1352.6L2464.1 1356.9L2460.5 1359.7L2456.3 1362.5L2452.1 1365.3L2446.5 1368.1L2442.2 1372.3L2438.0 1370.2L2433.8 1372.3L2429.6 1369.5L2425.3 1373.7L2421.1 1375.2L2418.3 1380.8L2419.0 1389.2L2414.1 1389.9L2412.7 1383.6L2408.4 1382.2L2404.2 1385.0L2399.9 1379.4L2393.5 1375.2L2395.6 1369.5L2394.2 1363.9L2390.0 1359.7L2387.2 1354.0L2387.2 1349.8L2380.2 1351.2L2376.6 1353.3L2378.1 1347.0L2376.6 1341.4L2380.2 1334.3L2384.4 1330.1L2386.5 1324.5L2387.2 1316.0L2386.5 1307.6L2383.0 1300.5L2383.0 1294.9Z" fill="#3464f2"><title>云南</title></path><path d="M2498.5 1324.5L2501.4 1323.1L2505.6 1324.5L2509.8 1320.2L2514.7 1321.7L2516.9 1325.9L2515.4 1332.9L2518.3 1338.5L2522.5 1342.8L2521.1 1348.4L2518.3 1354.0L2516.9 1359.7L2514.0 1365.3L2511.2 1370.9L2507.0 1375.2L2502.8 1379.4L2500.7 1385.0L2497.1 1386.4L2491.5 1385.0L2484.5 1383.6L2478.8 1380.8L2473.2 1379.4L2470.4 1373.7L2469.0 1368.1L2463.4 1365.3L2459.1 1363.9L2456.3 1362.5L2460.5 1359.7L2464.1 1356.9L2463.4 1352.6L2459.1 1349.8L2453.5 1347.0L2449.3 1342.8L2452.1 1340.0L2456.3 1338.5L2461.9 1341.4L2464.8 1338.5L2470.4 1335.7L2474.6 1331.5L2478.8 1332.9L2483.1 1335.7L2487.3 1332.9L2492.9 1328.7L2498.5 1324.5Z" fill="#c6d1f8"><title>广西</title></path><path d="M2522.5 1342.8L2525.3 1340.0L2529.5 1337.1L2533.7 1334.3L2539.4 1332.9L2544.3 1332.9L2546.4 1340.0L2549.2 1344.2L2554.9 1341.4L2560.5 1342.8L2564.0 1340.0L2570.4 1342.8L2573.2 1347.0L2574.6 1352.6L2576.0 1358.3L2571.8 1361.1L2566.1 1363.9L2560.5 1366.7L2554.9 1368.1L2549.2 1370.9L2545.0 1373.7L2540.8 1372.3L2539.4 1376.6L2533.7 1379.4L2528.1 1382.2L2522.5 1385.0L2516.9 1387.8L2511.2 1390.6L2508.4 1393.5L2507.0 1397.7L2508.4 1401.9L2505.6 1403.3L2501.4 1401.9L2499.3 1396.3L2500.0 1390.6L2500.7 1385.0L2502.8 1379.4L2507.0 1375.2L2511.2 1370.9L2514.0 1365.3L2516.9 1359.7L2518.3 1354.0L2521.1 1348.4L2522.5 1342.8Z" fill="#d8dff9"><title>广东</title></path><path d="M2571.1 1121.2L2576.0 1125.4L2579.5 1126.8L2576.7 1132.4L2573.2 1133.8L2571.8 1139.5L2566.1 1140.2L2560.5 1138.8L2559.1 1134.5L2563.3 1131.7L2564.0 1127.5L2567.5 1124.7Z" fill="#8ea8f7"><title>北京</title></path><path d="M2576.7 1132.4L2579.5 1133.8L2581.6 1139.5L2583.0 1143.7L2588.7 1146.5L2583.0 1152.1L2578.8 1153.5L2574.6 1150.7L2572.5 1145.1L2572.5 1139.5L2573.2 1133.8Z" fill="#c9d3f8"><title>天津</title></path><path d="M2497.1 1408.2L2504.2 1406.1L2511.2 1405.4L2514.0 1408.9L2512.6 1416.0L2508.4 1421.6L2504.2 1427.2L2500.0 1430.8L2492.9 1429.4L2489.4 1424.4L2488.7 1417.4L2491.5 1411.8Z" fill="#c0ccf8"><title>海南</title></path><path d="M2621.7 1334.3L2625.3 1337.1L2625.3 1344.2L2623.8 1352.6L2621.0 1361.1L2618.2 1369.5L2615.4 1378.0L2613.3 1380.1L2611.2 1375.2L2608.4 1366.7L2606.3 1361.1L2607.0 1355.4L2609.8 1348.4L2614.0 1341.4L2618.2 1336.4Z" fill="#c0ccf8"><title>台湾</title></path></g><rect x="2667" y="1339.500" width="62" height="89.500" fill="#fcfcfe" stroke="#111" stroke-width="1.600"/><path d="M2667.1 1339.7L2706.9 1339.7C2695.6 1344.2 2687.2 1349.1 2678.8 1349.5C2671.7 1349.1 2667.5 1345.6 2667.1 1339.7Z" fill="#e4e7f2" stroke="#111" stroke-width="1.200"/><path d="M2717.5 1339.7L2723.8 1339.7L2721.0 1345.6Z" fill="#e4e7f2" stroke="#111" stroke-width="1"/><path d="M2679.5 1354.0L2684.4 1353.3L2681.6 1359.7L2677.1 1360.8Z" fill="none" stroke="#111" stroke-width="1.200"/><path d="M2728.0 1344.2L2723.8 1351.2" stroke="#222" stroke-width="2"/><path d="M2721.0 1355.4L2716.8 1361.1" stroke="#222" stroke-width="2"/><path d="M2716.8 1366.0L2716.8 1372.3" stroke="#222" stroke-width="2"/><path d="M2716.8 1382.9L2713.2 1388.5" stroke="#222" stroke-width="2"/><path d="M2708.3 1399.1L2702.7 1407.5" stroke="#222" stroke-width="2"/><path d="M2694.2 1416.0L2687.2 1419.5" stroke="#222" stroke-width="2"/><path d="M2672.4 1400.5L2674.5 1408.9" stroke="#222" stroke-width="2"/><path d="M2683.7 1385.0L2678.1 1389.9" stroke="#222" stroke-width="2"/><path d="M2678.1 1369.5L2680.2 1375.9" stroke="#222" stroke-width="2"/><circle cx="2563.3" cy="1392.0" r="1.300" fill="#1c2c5e"/><circle cx="2572.5" cy="1397.0" r="1.300" fill="#1c2c5e"/><circle cx="2621.0" cy="1378.7" r="1.300" fill="#1c2c5e"/><circle cx="2599.9" cy="1357.6" r="1.300" fill="#1c2c5e"/></svg>
<div style="position:absolute;left:2067px;top:1253px;width:18px;height:116px;background:linear-gradient(#3464f2,#dfe4f8)"></div>
<div style="position:absolute;left:2067px;top:1247.5px;width:18px;height:4.5px;background:#3464f2;border-radius:2px"></div>
<div style="position:absolute;left:2067px;top:1369.5px;width:18px;height:4.5px;background:#dfe4f8;border-radius:2px"></div>
<div style="position:absolute;top:1232.5px;height:36px;line-height:36px;font-size:24px;color:#333;font-weight:350;white-space:nowrap;left:2095.5px;">24</div>
<div style="position:absolute;top:1352.0px;height:36px;line-height:36px;font-size:24px;color:#333;font-weight:350;white-space:nowrap;left:2095.5px;">1</div>
</div></div>
<div style="position:absolute;left:2018px;top:470px;width:900px;height:592px;background:#fff;border-radius:6px;box-shadow:0 4px 16px rgba(40,40,80,0.16),0 0 2px rgba(40,40,80,0.12)"></div>
<svg style="position:absolute;left:2084px;top:458px;" width="32" height="14" viewBox="0 0 32 14" fill="none"><path d="M0 14L16 0l16 14z" fill="#fff"/></svg>
<div style="position:absolute;left:2018px;top:558px;width:900px;height:1.5px;background:#ededf0"></div>
<div style="position:absolute;left:2018px;top:964px;width:900px;height:98px;background:#f7f7f7;border-radius:0 0 6px 6px"></div>
<div style="position:absolute;left:2039px;top:482px;width:858px;height:64px;background:#fff;border:2px solid #b9babd;border-radius:14px"></div>
<div style="position:absolute;top:493.5px;height:40px;line-height:40px;font-size:27px;color:#c2c3c6;font-weight:350;white-space:nowrap;left:2057px;">搜索</div>
<svg style="position:absolute;left:2855px;top:502px;" width="30" height="30" viewBox="0 0 30 30" fill="none"><circle cx="11.500" cy="11.500" r="8.800" stroke="#1d1f24" stroke-width="2.400"/><path d="M18 18L23.500 23.500" stroke="#1d1f24" stroke-width="2.400" stroke-linecap="round"/></svg>
<div style="position:absolute;left:2038.5px;top:591.5px;width:31px;height:31px;background:#fff;border:1.500px solid #c9cacd;border-radius:5px"></div>
<div style="position:absolute;top:590.0px;height:34px;line-height:34px;font-size:23.3px;color:#333;font-weight:350;white-space:nowrap;left:2091px;">重要客户</div>
<div style="position:absolute;left:2038.5px;top:663.5px;width:31px;height:31px;background:#fff;border:1.500px solid #c9cacd;border-radius:5px"></div>
<div style="position:absolute;top:662.0px;height:34px;line-height:34px;font-size:23.3px;color:#333;font-weight:350;white-space:nowrap;left:2091px;">普通客户</div>
<div style="position:absolute;left:2038.5px;top:998px;width:27px;height:27px;background:#fff;border:1.500px solid #c4c5c8;border-radius:7px"></div>
<div style="position:absolute;top:993.0px;height:38px;line-height:38px;font-size:25.8px;color:#333;font-weight:350;white-space:nowrap;left:2083px;">保存为默认值</div>
<div style="position:absolute;left:2706px;top:984px;width:92px;height:58px;background:#ff8000;border-radius:12px;color:#fff;font-size:25.500px;line-height:58px;text-align:center">确定</div>
<div style="position:absolute;left:2807px;top:984px;width:91px;height:58px;background:#fff;border:2px solid #c9cacd;border-radius:12px;color:#1d1f24;font-size:25.500px;line-height:54px;text-align:center">取消</div>
<div style="position:absolute;left:2804px;top:1391px;width:82px;height:82px;border-radius:41px;background:#fff;box-shadow:0 2px 12px rgba(60,60,120,0.18)"></div>
<svg style="position:absolute;left:2824px;top:1412px;" width="42" height="40" viewBox="0 0 42 40" fill="none"><defs><linearGradient id="rb" x1="0" y1="0" x2="1" y2="1"><stop offset="0" stop-color="#a04df5"/><stop offset="0.500" stop-color="#e055c8"/><stop offset="1" stop-color="#3d8bff"/></linearGradient></defs>
<rect x="4.500" y="11.500" width="33" height="24" rx="8" stroke="url(#rb)" stroke-width="3.400"/>
<path d="M15 11l-2.500-5 M27 11l2.500-5" stroke="#f0506a" stroke-width="2.400" stroke-linecap="round"/><circle cx="12" cy="5" r="2" stroke="#f0506a" stroke-width="1.600"/><circle cx="30" cy="5" r="2" stroke="#f0506a" stroke-width="1.600"/>
<circle cx="15" cy="23" r="2.200" fill="#a04df5"/><circle cx="27" cy="23" r="2.200" fill="#3d8bff"/><path d="M19 27.500q2 1.500 4 0" stroke="#c055d8" stroke-width="1.600" stroke-linecap="round"/></svg>
</body></html>
